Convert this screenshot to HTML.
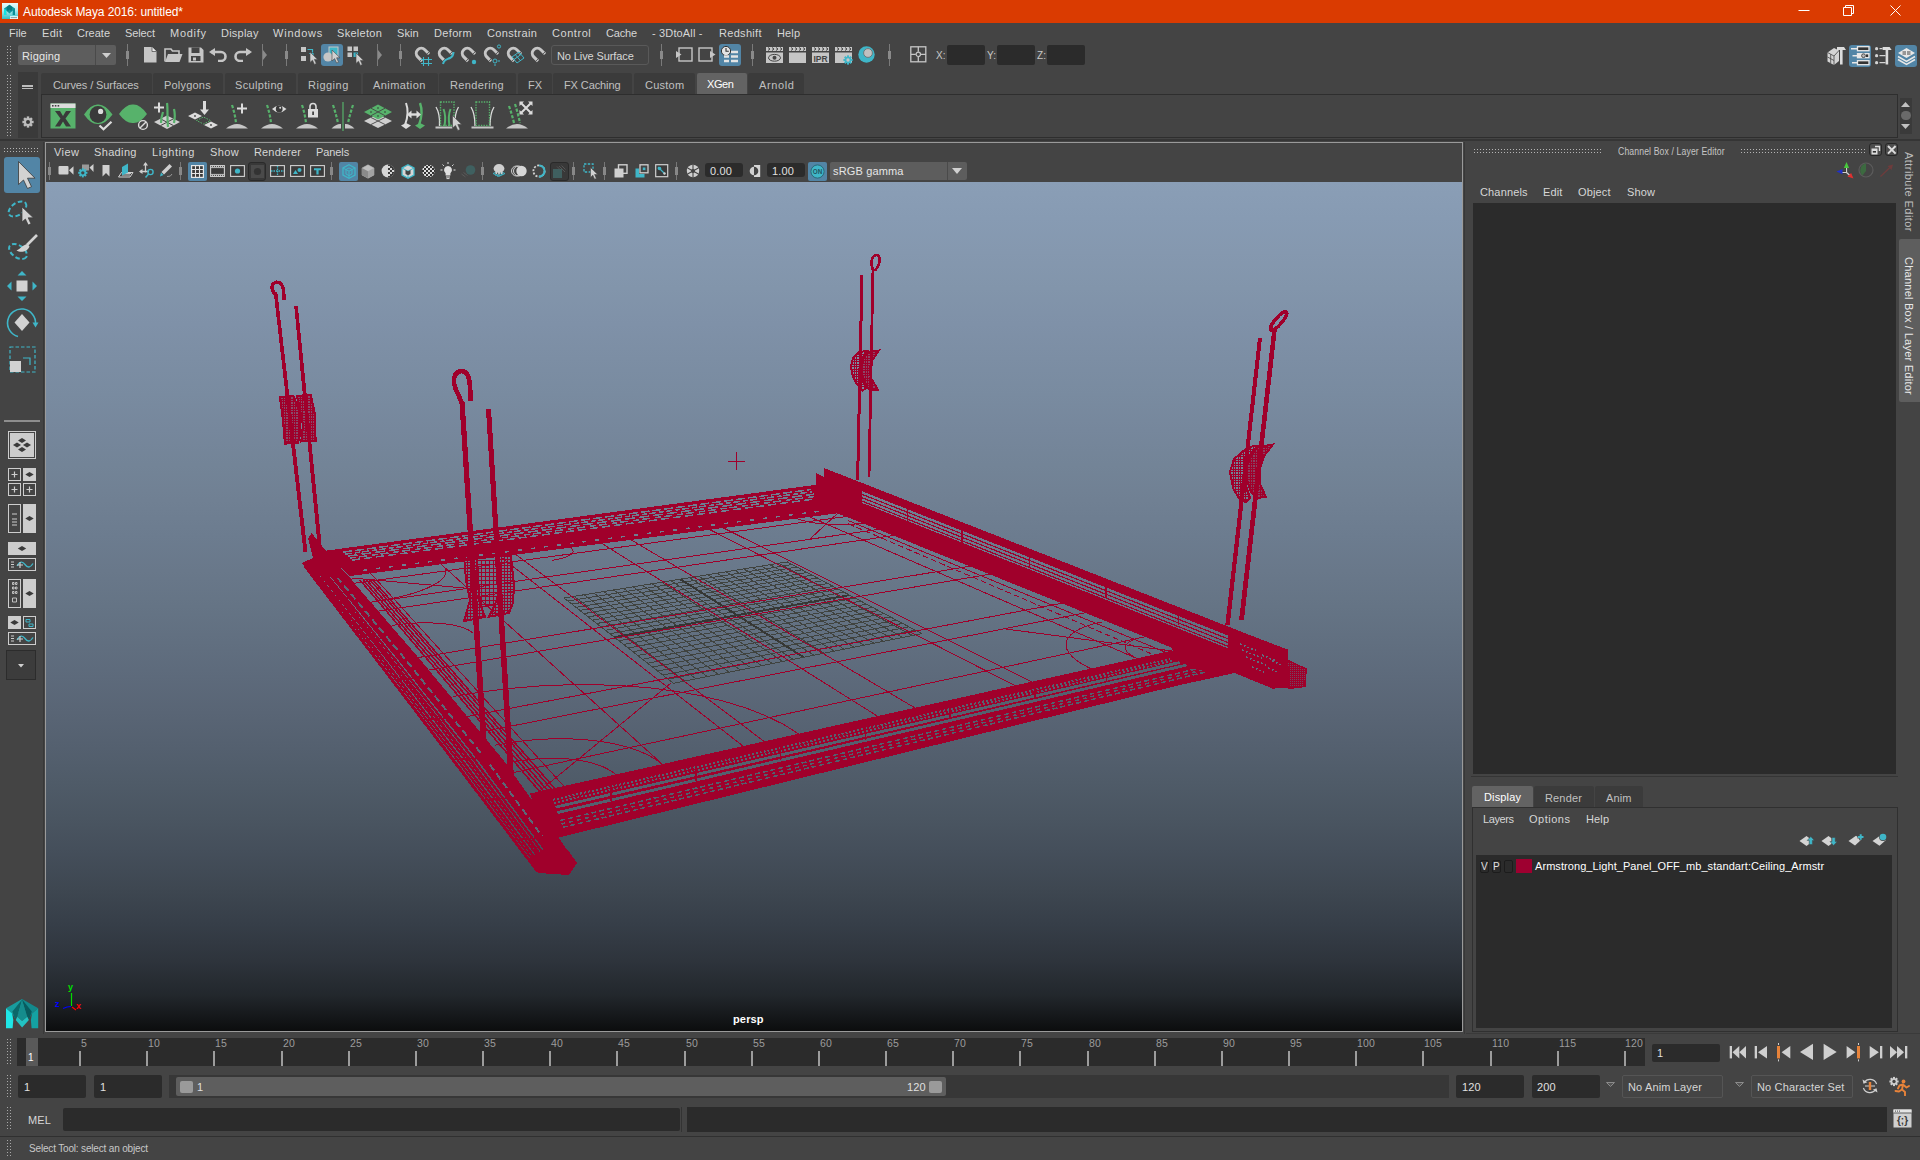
<!DOCTYPE html>
<html><head><meta charset="utf-8"><title>Autodesk Maya 2016: untitled*</title>
<style>
html,body{margin:0;padding:0}
body{width:1920px;height:1160px;background:#444444;position:relative;overflow:hidden;font-family:"Liberation Sans",sans-serif;font-size:11px;color:#d8d8d8}
div,span,svg{position:absolute;box-sizing:border-box}
.t{white-space:nowrap;line-height:14px;height:14px;letter-spacing:0.15px}
</style></head>
<body>
<div style="left:0px;top:0px;width:1920px;height:23px;background:#da3b01;"></div><svg style="left:2px;top:3px" width="16" height="16" viewBox="0 0 16 16" ><defs><linearGradient id="mti" x1="0" y1="0" x2="0" y2="1"><stop offset="0" stop-color="#e6fbfb"/><stop offset="0.45" stop-color="#b4ecee"/><stop offset="1" stop-color="#2fbfc6"/></linearGradient></defs><rect width="16" height="16" fill="url(#mti)"/><path d="M2 12V5.5L7.5 1.8L13 5.5V12H10.8V7.5L7.5 10.5L4.2 7.5V12z" fill="#0f9aa0"/><path d="M2 12V5.5l2.2 1.6V12z" fill="#12e4e4"/><path d="M13 12V5.500l-2.2 1.6V12z" fill="#0b8f95"/><path d="M4.600 4.200L7.500 1.800l2.900 2.400L9.400 8.600L7.500 6.500L5.600 8.600z" fill="#097a80"/><rect x="8" y="13.200" width="8" height="2.800" fill="#f4ffff"/><rect x="8.600" y="14" width="6.500" height="1.200" fill="#8aa"/></svg><span class="t" style="left:23px;top:5px;color:#ffffff;font-size:12px;letter-spacing:-0.1px">Autodesk Maya 2016: untitled*</span><svg style="left:1790px;top:0" width="130" height="23" viewBox="1790 0 130 23"><path d="M1798.5 10.5h11M1843.5 7.5h8v8h-8zM1845.5 7.5v-2h8v8h-2M1890.5 5.5l10 10M1900.5 5.5l-10 10" stroke="#fff" stroke-width="1" fill="none"/></svg><span class="t" style="left:9px;top:26px;color:#d6d6d6;letter-spacing:0px">File</span><span class="t" style="left:42px;top:26px;color:#d6d6d6;letter-spacing:0.33px">Edit</span><span class="t" style="left:77px;top:26px;color:#d6d6d6;letter-spacing:0px">Create</span><span class="t" style="left:125px;top:26px;color:#d6d6d6;letter-spacing:-0.12px">Select</span><span class="t" style="left:170px;top:26px;color:#d6d6d6;letter-spacing:0.73px">Modify</span><span class="t" style="left:221px;top:26px;color:#d6d6d6;letter-spacing:0.22px">Display</span><span class="t" style="left:273px;top:26px;color:#d6d6d6;letter-spacing:0.78px">Windows</span><span class="t" style="left:337px;top:26px;color:#d6d6d6;letter-spacing:0.29px">Skeleton</span><span class="t" style="left:397px;top:26px;color:#d6d6d6;letter-spacing:0.1px">Skin</span><span class="t" style="left:434px;top:26px;color:#d6d6d6;letter-spacing:0.34px">Deform</span><span class="t" style="left:487px;top:26px;color:#d6d6d6;letter-spacing:0.34px">Constrain</span><span class="t" style="left:552px;top:26px;color:#d6d6d6;letter-spacing:0.55px">Control</span><span class="t" style="left:606px;top:26px;color:#d6d6d6;letter-spacing:-0.15px">Cache</span><span class="t" style="left:652px;top:26px;color:#d6d6d6;letter-spacing:0.15px">- 3DtoAll -</span><span class="t" style="left:719px;top:26px;color:#d6d6d6;letter-spacing:0.3px">Redshift</span><span class="t" style="left:777px;top:26px;color:#d6d6d6;letter-spacing:0.15px">Help</span><div style="left:7px;top:46px;width:1px;height:20px;background:repeating-linear-gradient(to bottom,#a8a8a8 0 1px,transparent 1px 3px)"></div><div style="left:10px;top:46px;width:1px;height:20px;background:repeating-linear-gradient(to bottom,#a8a8a8 0 1px,transparent 1px 3px)"></div><div style="left:18px;top:45px;width:98px;height:20px;background:#5d5d5d;border-radius:2px"></div><div style="left:95px;top:45px;width:1px;height:20px;background:#4a4a4a;"></div><svg style="left:102px;top:53px" width="9" height="5" viewBox="0 0 9 5" ><path d="M0 0h9l-4.5 5z" fill="#cfcfcf"/></svg><span class="t" style="left:22px;top:49px;color:#e6e6e6;">Rigging</span><div style="left:127px;top:44px;width:1px;height:22px;background:#7a7a7a"></div><div style="left:126px;top:51px;width:3px;height:8px;background:#8a8a8a"></div><svg style="left:144px;top:47px" width="13" height="16" viewBox="0 0 13 16" ><path d="M0 0h8l4.5 4.5V15.5H0z" fill="#c6c6c6"/><path d="M8 0v4.5h4.5" fill="#e8e8e8" stroke="#444" stroke-width="0.7"/></svg><svg style="left:164px;top:48px" width="19" height="14" viewBox="0 0 19 14" ><path d="M1 13.5V1h6l1.5 2H15v3" fill="none" stroke="#c6c6c6" stroke-width="1.6"/><path d="M4 6h14.5l-3 8H1z" fill="#c6c6c6"/></svg><svg style="left:188px;top:47px" width="16" height="16" viewBox="0 0 16 16" ><path d="M0.5 0.5h12.5l2.5 2.5v12.5h-15z" fill="#c6c6c6"/><rect x="3.5" y="0.5" width="8" height="5.5" fill="#444"/><rect x="4.5" y="1" width="4" height="4.5" fill="#c6c6c6" opacity="0.0"/><rect x="3" y="9" width="9.5" height="5" fill="#444"/><rect x="5" y="10.5" width="3" height="3" fill="#c6c6c6"/></svg><svg style="left:209px;top:48px" width="19" height="14" viewBox="0 0 19 14" ><path d="M2 4h10a4.5 4.5 0 0 1 0 9h-3" fill="none" stroke="#c6c6c6" stroke-width="2.6"/><path d="M0 4l6-4v8z" fill="#c6c6c6"/></svg><svg style="left:233px;top:48px" width="19" height="14" viewBox="0 0 19 14" ><path d="M17 4h-10a4.5 4.5 0 0 0 0 9h3" fill="none" stroke="#c6c6c6" stroke-width="2.6"/><path d="M19 4l-6-4v8z" fill="#c6c6c6"/></svg><div style="left:262px;top:44px;width:1px;height:22px;background:#7a7a7a"></div><svg style="left:263px;top:50px" width="4" height="10" viewBox="0 0 4 10" ><path d="M0 0l4 5l-4 5z" fill="#8a8a8a"/></svg><div style="left:286px;top:44px;width:1px;height:22px;background:#7a7a7a"></div><div style="left:285px;top:51px;width:3px;height:8px;background:#8a8a8a"></div><svg style="left:300px;top:46px" width="19" height="20" viewBox="0 0 19 20" ><rect x="1" y="1" width="5" height="5" fill="#c6c6c6"/><rect x="1" y="10" width="5" height="5" fill="#c6c6c6"/><path d="M7.5 3.5h5v3M9 7.5h4v4" fill="none" stroke="#3fb6c8" stroke-width="1.2"/><path d="M10.0 6.0L10.0 16.4L12.5 14.2L14.4 18.4L16.3 17.6L14.4 13.4L17.6 13.4z" fill="#d0d0d0" stroke="#444" stroke-width="0.6"/></svg><div style="left:321px;top:44px;width:22px;height:22px;background:#5285a6;border-radius:3px"></div><svg style="left:322px;top:45px" width="20" height="20" viewBox="0 0 20 20" ><rect x="7" y="2" width="9" height="9" fill="#3fb6c8" stroke="#c6c6c6" stroke-width="1"/><circle cx="6" cy="12" r="4.6" fill="#c6c6c6"/><path d="M10.0 5.0L10.0 16.0L12.6 13.6L14.6 18.0L16.6 17.2L14.6 12.8L18.0 12.8z" fill="#d0d0d0" stroke="#444" stroke-width="0.6"/></svg><svg style="left:347px;top:46px" width="19" height="20" viewBox="0 0 19 20" ><rect x="0.5" y="0.5" width="4.5" height="4.5" fill="#c6c6c6"/><rect x="6.5" y="0.5" width="4.5" height="4.5" fill="#c6c6c6"/><rect x="0.5" y="6.5" width="4.5" height="4.5" fill="#c6c6c6"/><rect x="6.5" y="6.5" width="4.5" height="4.5" fill="#3fb6c8"/><path d="M9.0 7.0L9.0 17.4L11.5 15.2L13.4 19.4L15.3 18.6L13.4 14.4L16.6 14.4z" fill="#d0d0d0" stroke="#444" stroke-width="0.6"/></svg><div style="left:377px;top:44px;width:1px;height:22px;background:#7a7a7a"></div><svg style="left:378px;top:50px" width="4" height="10" viewBox="0 0 4 10" ><path d="M0 0l4 5l-4 5z" fill="#8a8a8a"/></svg><div style="left:400px;top:44px;width:1px;height:22px;background:#7a7a7a"></div><div style="left:399px;top:51px;width:3px;height:8px;background:#8a8a8a"></div><svg style="left:414px;top:45px" width="20" height="21" viewBox="0 0 20 21" ><g transform="rotate(-45 8 9)"><path d="M3 14V8a5 5 0 0 1 10 0v6" fill="none" stroke="#c6c6c6" stroke-width="3"/><path d="M1.5 12.5h3M11.5 12.5h3" stroke="#444" stroke-width="0.8"/></g><path d="M9.5 12v9M14.5 12v9M7 14.5h11M7 18.5h11" stroke="#3fb6c8" stroke-width="1.1" fill="none"/></svg><svg style="left:437px;top:45px" width="20" height="21" viewBox="0 0 20 21" ><g transform="rotate(-45 8 9)"><path d="M3 14V8a5 5 0 0 1 10 0v6" fill="none" stroke="#c6c6c6" stroke-width="3"/><path d="M1.5 12.5h3M11.5 12.5h3" stroke="#444" stroke-width="0.8"/></g><path d="M6 19c1-5 4-4.5 7-6c3-1.5 3.5-4 3.5-6" stroke="#3fb6c8" stroke-width="2" fill="none"/></svg><svg style="left:460px;top:45px" width="20" height="21" viewBox="0 0 20 21" ><g transform="rotate(-45 8 9)"><path d="M3 14V8a5 5 0 0 1 10 0v6" fill="none" stroke="#c6c6c6" stroke-width="3"/><path d="M1.5 12.5h3M11.5 12.5h3" stroke="#444" stroke-width="0.8"/></g><circle cx="14" cy="17" r="2.2" fill="#3fb6c8"/></svg><svg style="left:483px;top:43px" width="20" height="23" viewBox="0 0 20 23" ><g transform="translate(0 2) rotate(-45 8 9)"><path d="M3 14V8a5 5 0 0 1 10 0v6" fill="none" stroke="#c6c6c6" stroke-width="3"/><path d="M1.5 12.5h3M11.5 12.5h3" stroke="#444" stroke-width="0.8"/></g><circle cx="16" cy="3.5" r="1.6" fill="none" stroke="#3fb6c8" stroke-width="1"/><circle cx="12" cy="18" r="2" fill="none" stroke="#3fb6c8" stroke-width="1"/><path d="M12 21v2M15 18h2" stroke="#3fb6c8" stroke-width="1"/></svg><svg style="left:506px;top:45px" width="20" height="21" viewBox="0 0 20 21" ><g transform="rotate(-45 8 9)"><path d="M3 14V8a5 5 0 0 1 10 0v6" fill="none" stroke="#c6c6c6" stroke-width="3"/><path d="M1.5 12.5h3M11.5 12.5h3" stroke="#444" stroke-width="0.8"/></g><path d="M6 12l7-5l5 6l-7 5zM9.5 9.8l5 6M8 14.5l7-5" stroke="#3fb6c8" stroke-width="1" fill="none"/></svg><svg style="left:530px;top:45px" width="20" height="21" viewBox="0 0 20 21" ><g transform="rotate(-45 8 9)"><path d="M3 14V8a5 5 0 0 1 10 0v6" fill="none" stroke="#c6c6c6" stroke-width="3"/><path d="M1.5 12.5h3M11.5 12.5h3" stroke="#444" stroke-width="0.8"/></g></svg><div style="left:661px;top:44px;width:1px;height:22px;background:#7a7a7a"></div><div style="left:660px;top:51px;width:3px;height:8px;background:#8a8a8a"></div><svg style="left:676px;top:47px" width="18" height="16" viewBox="0 0 18 16" ><rect x="3" y="1" width="13" height="13" fill="none" stroke="#c6c6c6" stroke-width="1.4"/><path d="M0 4l5.5 3.5L0 11z" fill="#c6c6c6"/></svg><svg style="left:698px;top:47px" width="19" height="16" viewBox="0 0 19 16" ><rect x="1" y="1" width="13" height="13" fill="none" stroke="#c6c6c6" stroke-width="1.4"/><path d="M12 4l5.5 3.5L12 11z" fill="#c6c6c6"/></svg><div style="left:719px;top:44px;width:22px;height:22px;background:#5285a6;border-radius:3px"></div><svg style="left:720px;top:45px" width="20" height="20" viewBox="0 0 20 20" ><circle cx="6" cy="6" r="4.6" fill="#e4e4e4" stroke="#333" stroke-width="1"/><path d="M6 3v3.3h2.8" stroke="#333" stroke-width="1.1" fill="none"/><path d="M11 7h7M11 11.5h7M11 16h7" stroke="#e4e4e4" stroke-width="2.4"/><path d="M4 11.5h5M4 16h5" stroke="#e4e4e4" stroke-width="2.4"/></svg><div style="left:752px;top:44px;width:1px;height:22px;background:#7a7a7a"></div><div style="left:751px;top:51px;width:3px;height:8px;background:#8a8a8a"></div><svg style="left:766px;top:47px" width="17" height="16" viewBox="0 0 17 16" ><path d="M0 0h17v4h-17z" fill="#c6c6c6"/><path d="M2 0.5l2 1.5l-2 1.5M6 0.5l2 1.5l-2 1.5M10 0.5l2 1.5l-2 1.5M14 0.5l2 1.5l-2 1.5" stroke="#444" stroke-width="1" fill="none"/><path d="M0 5.5h17v10.5h-17z" fill="#c6c6c6"/><ellipse cx="8.5" cy="10.8" rx="6" ry="3.4" fill="none" stroke="#444" stroke-width="1"/><circle cx="8.5" cy="10.8" r="2" fill="#444"/></svg><svg style="left:789px;top:47px" width="17" height="16" viewBox="0 0 17 16" ><path d="M0 0h17v4h-17z" fill="#c6c6c6"/><path d="M2 0.5l2 1.5l-2 1.5M6 0.5l2 1.5l-2 1.5M10 0.5l2 1.5l-2 1.5M14 0.5l2 1.5l-2 1.5" stroke="#444" stroke-width="1" fill="none"/><path d="M0 5.5h17v10.5h-17z" fill="#c6c6c6"/></svg><svg style="left:812px;top:47px" width="17" height="16" viewBox="0 0 17 16" ><path d="M0 0h17v4h-17z" fill="#c6c6c6"/><path d="M2 0.5l2 1.5l-2 1.5M6 0.5l2 1.5l-2 1.5M10 0.5l2 1.5l-2 1.5M14 0.5l2 1.5l-2 1.5" stroke="#444" stroke-width="1" fill="none"/><path d="M0 5.5h17v10.5h-17z" fill="#c6c6c6"/><text x="8.5" y="14.5" font-size="8.5" font-weight="bold" text-anchor="middle" fill="#444" font-family="Liberation Sans,sans-serif">IPR</text></svg><svg style="left:835px;top:47px" width="19" height="18" viewBox="0 0 19 18" ><path d="M0 0h17v4h-17z" fill="#c6c6c6"/><path d="M2 0.5l2 1.5l-2 1.5M6 0.5l2 1.5l-2 1.5M10 0.5l2 1.5l-2 1.5M14 0.5l2 1.5l-2 1.5" stroke="#444" stroke-width="1" fill="none"/><path d="M0 5.5h17v10.5h-17z" fill="#c6c6c6"/><circle cx="13" cy="13" r="3.31" fill="#3fb6c8"/><rect x="11.99" y="8.40" width="2.02" height="9.20" fill="#3fb6c8" transform="rotate(0 13 13)"/><rect x="11.99" y="8.40" width="2.02" height="9.20" fill="#3fb6c8" transform="rotate(45 13 13)"/><rect x="11.99" y="8.40" width="2.02" height="9.20" fill="#3fb6c8" transform="rotate(90 13 13)"/><rect x="11.99" y="8.40" width="2.02" height="9.20" fill="#3fb6c8" transform="rotate(135 13 13)"/><circle cx="13" cy="13" r="1.66" fill="#c6c6c6"/></svg><svg style="left:858px;top:46px" width="18" height="18" viewBox="0 0 18 18" ><circle cx="8.5" cy="8.5" r="8.2" fill="#3fb6c8"/><circle cx="10" cy="7" r="4.4" fill="#c0c0c0" stroke="#6a6a6a" stroke-width="0.8"/></svg><div style="left:889px;top:44px;width:1px;height:22px;background:#7a7a7a"></div><div style="left:888px;top:51px;width:3px;height:8px;background:#8a8a8a"></div><svg style="left:910px;top:46px" width="17" height="17" viewBox="0 0 17 17" ><rect x="0.8" y="0.8" width="15" height="15" fill="none" stroke="#c6c6c6" stroke-width="1.3"/><path d="M8.3 0.8v5M8.3 11v5M0.8 8.3h5M11 8.3h5" stroke="#c6c6c6" stroke-width="1.3"/><circle cx="8.3" cy="8.3" r="2.2" fill="none" stroke="#c6c6c6" stroke-width="1.2"/></svg><svg style="left:1827px;top:46px" width="20" height="20" viewBox="0 0 20 20" ><path d="M0.5 6.5l6.5-4.5l5 2.500v10.500l-5 4l-6.500-3.500z" fill="#d4d4d4"/><path d="M0.5 6.500l6.500 3.500l5-5.500M7 10v9M0.5 11l6.500 3.500M3.700 8.200v9" stroke="#444" stroke-width="0.8" fill="none"/><path d="M10 1h7l2 3h-9z" fill="#dcdcdc"/><rect x="13" y="4" width="2.6" height="14.5" fill="#dcdcdc"/></svg><div style="left:1849px;top:45px;width:22px;height:22px;background:#5285a6;border-radius:3px"></div><svg style="left:1850px;top:46px" width="20" height="20" viewBox="0 0 20 20" ><path d="M1 2.700h6M2.500 9.700h4.500M2 16.700h5" stroke="#e8e8e8" stroke-width="1.400"/><rect x="7.500" y="0.700" width="11.500" height="4" fill="#333" stroke="#e8e8e8" stroke-width="1.300"/><rect x="7.500" y="14.700" width="11.500" height="4" fill="#333" stroke="#e8e8e8" stroke-width="1.300"/><rect x="7.500" y="7.700" width="11.500" height="4" fill="#e8e8e8" stroke="#e8e8e8" stroke-width="1.300"/><circle cx="13.500" cy="9.700" r="1.900" fill="#bbb" stroke="#333" stroke-width="0.800"/><rect x="16" y="8.400" width="2.200" height="2.600" fill="#333"/></svg><svg style="left:1874px;top:46px" width="20" height="20" viewBox="0 0 20 20" ><circle cx="2.600" cy="2.700" r="1.600" fill="#d4d4d4"/><circle cx="2.600" cy="9.700" r="1.600" fill="#d4d4d4"/><circle cx="2.600" cy="16.700" r="1.600" fill="#d4d4d4"/><path d="M5.500 2.700h3M5.500 9.700h6M5.500 16.700h6" stroke="#d4d4d4" stroke-width="1.300"/><path d="M8.6 1h7l2 3h-9z" fill="#dcdcdc"/><rect x="11.6" y="4" width="2.6" height="14.5" fill="#dcdcdc"/></svg><div style="left:1895px;top:45px;width:22px;height:22px;background:#5285a6;border-radius:3px"></div><svg style="left:1897px;top:46px" width="19" height="21" viewBox="0 0 19 21" ><path d="M1 13.500l8.500 5l8.500-5M1 10.500l8.500 5l8.500-5" stroke="#e8e8e8" stroke-width="1.500" fill="none"/><path d="M1 7l8.500-5l8.500 5l-8.500 5z" fill="#e8e8e8"/><path d="M5.500 6h3.500M10 6h3.500M5.500 8h3.500M10 8h3.500" stroke="#333" stroke-width="0.900" fill="none"/></svg><div style="left:551px;top:45px;width:98px;height:20px;background:#444;border:1px solid #595959;border-radius:3px"></div><span class="t" style="left:557px;top:49px;color:#d6d6d6;letter-spacing:-0.1px">No Live Surface</span><span class="t" style="left:936px;top:49px;color:#c8c8c8;font-size:10px;">X:</span><div style="left:947px;top:45px;width:38px;height:20px;background:#2b2b2b;border-radius:2px"></div><span class="t" style="left:987px;top:49px;color:#c8c8c8;font-size:10px;">Y:</span><div style="left:997px;top:45px;width:38px;height:20px;background:#2b2b2b;border-radius:2px"></div><span class="t" style="left:1037px;top:49px;color:#c8c8c8;font-size:10px;">Z:</span><div style="left:1047px;top:45px;width:38px;height:20px;background:#2b2b2b;border-radius:2px"></div><div style="left:7px;top:75px;width:1px;height:62px;background:repeating-linear-gradient(to bottom,#a8a8a8 0 1px,transparent 1px 3px)"></div><div style="left:10px;top:75px;width:1px;height:62px;background:repeating-linear-gradient(to bottom,#a8a8a8 0 1px,transparent 1px 3px)"></div><div style="left:18px;top:72px;width:20px;height:66px;background:#3a3a3a;"></div><div style="left:22px;top:85px;width:11px;height:2px;background:#bdbdbd;"></div><div style="left:22px;top:88px;width:11px;height:1px;background:#bdbdbd;"></div><svg style="left:22px;top:116px" width="12" height="12" viewBox="0 0 12 12" ><circle cx="6" cy="6" r="4.03" fill="#bdbdbd"/><rect x="4.77" y="0.40" width="2.46" height="11.20" fill="#bdbdbd" transform="rotate(0 6 6)"/><rect x="4.77" y="0.40" width="2.46" height="11.20" fill="#bdbdbd" transform="rotate(45 6 6)"/><rect x="4.77" y="0.40" width="2.46" height="11.20" fill="#bdbdbd" transform="rotate(90 6 6)"/><rect x="4.77" y="0.40" width="2.46" height="11.20" fill="#bdbdbd" transform="rotate(135 6 6)"/><circle cx="6" cy="6" r="2.02" fill="#3a3a3a"/></svg><div style="left:41px;top:73px;width:111px;height:21px;background:#3b3b3b;border-radius:2px 2px 0 0"></div><span class="t" style="left:53px;top:78px;color:#c0c0c0;letter-spacing:-0.1px">Curves / Surfaces</span><div style="left:153px;top:73px;width:70px;height:21px;background:#3b3b3b;border-radius:2px 2px 0 0"></div><span class="t" style="left:164px;top:78px;color:#c0c0c0;letter-spacing:0.2px">Polygons</span><div style="left:225px;top:73px;width:71px;height:21px;background:#3b3b3b;border-radius:2px 2px 0 0"></div><span class="t" style="left:235px;top:78px;color:#c0c0c0;letter-spacing:0.34px">Sculpting</span><div style="left:298px;top:73px;width:63px;height:21px;background:#3b3b3b;border-radius:2px 2px 0 0"></div><span class="t" style="left:308px;top:78px;color:#c0c0c0;letter-spacing:0.5px">Rigging</span><div style="left:363px;top:73px;width:75px;height:21px;background:#3b3b3b;border-radius:2px 2px 0 0"></div><span class="t" style="left:373px;top:78px;color:#c0c0c0;letter-spacing:0.43px">Animation</span><div style="left:439px;top:73px;width:77px;height:21px;background:#3b3b3b;border-radius:2px 2px 0 0"></div><span class="t" style="left:450px;top:78px;color:#c0c0c0;letter-spacing:0.37px">Rendering</span><div style="left:518px;top:73px;width:34px;height:21px;background:#3b3b3b;border-radius:2px 2px 0 0"></div><span class="t" style="left:528px;top:78px;color:#c0c0c0;letter-spacing:0px">FX</span><div style="left:553px;top:73px;width:79px;height:21px;background:#3b3b3b;border-radius:2px 2px 0 0"></div><span class="t" style="left:564px;top:78px;color:#c0c0c0;letter-spacing:-0.1px">FX Caching</span><div style="left:634px;top:73px;width:61px;height:21px;background:#3b3b3b;border-radius:2px 2px 0 0"></div><span class="t" style="left:645px;top:78px;color:#c0c0c0;letter-spacing:0.25px">Custom</span><div style="left:697px;top:73px;width:50px;height:21px;background:#636363;border-radius:2px 2px 0 0"></div><span class="t" style="left:707px;top:77px;color:#ffffff;letter-spacing:-0.4px">XGen</span><div style="left:748px;top:73px;width:56px;height:21px;background:#3b3b3b;border-radius:2px 2px 0 0"></div><span class="t" style="left:759px;top:78px;color:#c0c0c0;letter-spacing:0.6px">Arnold</span><div style="left:41px;top:94px;width:1857px;height:44px;background:#444444;border:1px solid #2e2e2e"></div><svg style="left:50px;top:101px" width="26" height="30" viewBox="0 0 26 30" ><rect x="0.5" y="2.5" width="25" height="25" fill="#57b26b"/><rect x="0.5" y="2.5" width="25" height="4.5" fill="#dcdcdc"/><rect x="2" y="4" width="1.6" height="1.6" fill="#444"/><rect x="4.8" y="4" width="1.6" height="1.6" fill="#444"/><rect x="7.6" y="4" width="1.6" height="1.6" fill="#444"/><path d="M5 10h5l3 5l3-5h5l-5.5 7.5l5.5 8h-5l-3-5l-3 5h-5l5.5-8z" fill="#3a3a3a"/></svg><svg style="left:84px;top:101px" width="30" height="30" viewBox="0 0 30 30" ><path d="M0 13.5Q7 3 14 3.5Q21 3 28.5 13.5Q21 23.5 14 23Q7 23.5 0 13.5z" fill="#57b26b"/><circle cx="14" cy="13.5" r="8.4" fill="#3a3a3a"/><circle cx="16.6" cy="10.4" r="2.6" fill="#dcdcdc"/><path d="M15.5 24.5l4 3.8l8-7.5" fill="none" stroke="#dcdcdc" stroke-width="2.2"/></svg><svg style="left:119px;top:101px" width="30" height="30" viewBox="0 0 30 30" ><path d="M0 13Q7 3 14 3.5Q21 3 28 13Q21 22.5 14 22Q7 22.5 0 13z" fill="#57b26b"/><circle cx="24" cy="24" r="4.4" fill="#444" stroke="#dcdcdc" stroke-width="1.4"/><path d="M21 27l6-6" stroke="#dcdcdc" stroke-width="1.4"/></svg><svg style="left:153px;top:101px" width="29" height="30" viewBox="0 0 29 30" ><path d="M1 21l13-6.5l13 6.5l-13 7z" fill="#cfcfcf"/><path d="M7.5 17.8l13 6.8M20.5 17.8l-13 6.8" stroke="#444" stroke-width="1"/><path d="M1 6.5h10M6 1.5v10" stroke="#dcdcdc" stroke-width="2"/><path d="M8 22c0-5 1-8 2-11M15 26c-1-8 0-18-1-24M21 22c1-5 1-10 0-14" fill="none" stroke="#57b26b" stroke-width="2.2"/></svg><svg style="left:188px;top:101px" width="30" height="30" viewBox="0 0 30 30" ><path d="M16.5 0v10" stroke="#dcdcdc" stroke-width="3"/><path d="M12 8.5h9l-4.5 5.5z" fill="#dcdcdc"/><path d="M0 15l7-3.5l7 3.5l-7 3.5zM16 24l7-3.5l7 3.5l-7 3.5z" fill="#dcdcdc"/><circle cx="7" cy="15" r="0.9" fill="#444"/><circle cx="23" cy="24" r="0.9" fill="#444"/><path d="M8.5 19.5l7-3.5l7 3.5l-7 3.5z" fill="none" stroke="#57b26b" stroke-width="1" stroke-dasharray="1.6 1.2"/></svg><svg style="left:226px;top:101px" width="24" height="30" viewBox="0 0 24 30" ><path d="M0.0 27.5q11.0 -9 22 0z" fill="#c6c6c6"/><path d="M6 4Q9 13.0 10 22" fill="none" stroke="#57b26b" stroke-width="2.2" stroke-dasharray="3.2 1.6"/><path d="M11 7.5h10M16 2.5v10" stroke="#dcdcdc" stroke-width="2"/></svg><svg style="left:261px;top:101px" width="27" height="30" viewBox="0 0 27 30" ><path d="M0.0 27.5q11.0 -9 22 0z" fill="#c6c6c6"/><path d="M6 4Q9 13.0 10 22" fill="none" stroke="#57b26b" stroke-width="2.2" stroke-dasharray="3.2 1.6"/><path d="M11 8Q18 1 25.5 8Q18 15 11 8z" fill="#dcdcdc"/><circle cx="18.2" cy="8" r="3.4" fill="#3a3a3a"/><circle cx="19.2" cy="6.8" r="1" fill="#dcdcdc"/></svg><svg style="left:296px;top:101px" width="24" height="30" viewBox="0 0 24 30" ><path d="M0.0 27.5q11.0 -9 22 0z" fill="#c6c6c6"/><path d="M6 4Q9 13.0 10 22" fill="none" stroke="#57b26b" stroke-width="2.2" stroke-dasharray="3.2 1.6"/><rect x="12" y="8" width="10" height="8.5" fill="#dcdcdc"/><path d="M14 8V5.5a3 3 0 0 1 6 0V8" fill="none" stroke="#dcdcdc" stroke-width="1.6"/><rect x="16.2" y="10.5" width="1.8" height="3.5" fill="#444"/></svg><svg style="left:331px;top:101px" width="24" height="30" viewBox="0 0 24 30" ><path d="M0.5 27.5q5 -5 9.5 -4.5v4.5zM23.5 27.5q-5 -5 -9.5 -4.5v4.5z" fill="#c6c6c6"/><path d="M12 1v29" stroke="#57b26b" stroke-width="1.2"/><path d="M2 4Q5 13.0 7 22" fill="none" stroke="#57b26b" stroke-width="2.2" stroke-dasharray="3.2 1.6"/><path d="M22 4Q19 13.0 17 22" fill="none" stroke="#57b26b" stroke-width="2.2" stroke-dasharray="3.2 1.6"/></svg><svg style="left:364px;top:101px" width="28" height="30" viewBox="0 0 28 30" ><path d="M0 20l14-7l14 7l-14 7z" fill="#cfcfcf"/><path d="M7 16.5l14 7M21 16.5l-14 7" stroke="#444" stroke-width="0.9"/><path d="M0 11l14-7.5l14 7.5l-14 7.5z" fill="#57b26b"/><path d="M7 7.2l14 7.5M21 7.2l-14 7.5" stroke="#444" stroke-width="0.9"/><circle cx="14" cy="7" r="0.8" fill="#333"/><circle cx="7" cy="11" r="0.8" fill="#333"/><circle cx="21" cy="11" r="0.8" fill="#333"/><circle cx="14" cy="15" r="0.8" fill="#333"/></svg><svg style="left:400px;top:101px" width="26" height="30" viewBox="0 0 26 30" ><path d="M6 2c3 8 2 14-1 22" fill="none" stroke="#dcdcdc" stroke-width="2"/><path d="M20 2c3 8 2 14-1 22" fill="none" stroke="#57b26b" stroke-width="2.4"/><path d="M1 24.5l5-2.5l5 2.5l-5 3.5z" fill="#dcdcdc"/><path d="M15 24.5l5-2.5l5 2.5l-5 3.5z" fill="#57b26b"/><path d="M10 13.5h8" stroke="#dcdcdc" stroke-width="2.4"/><path d="M7 13.5l4.5-4v8zM21 13.5l-4.5-4v8z" fill="#dcdcdc"/></svg><svg style="left:435px;top:101px" width="29" height="32" viewBox="0 0 29 32" ><path d="M0.5 26.5h17" stroke="#c6c6c6" stroke-width="2"/><path d="M1 6c3 5 4 10 3.5 19M23.5 6c-3 5 -4 10 -3.5 19" fill="none" stroke="#dcdcdc" stroke-width="1.3"/><path d="M8.5 8c2 5 2 11 1 17M15.5 8c-2 5 -2 11 -1 17" fill="none" stroke="#57b26b" stroke-width="2"/><rect x="5.5" y="1" width="13.5" height="23.5" fill="none" stroke="#57b26b" stroke-width="1.4" stroke-dasharray="1.4 1.2"/><path d="M17.5 14.5L17.5 27.1L20.5 24.4L22.8 29.4L25.1 28.5L22.8 23.5L26.7 23.5z" fill="#d0d0d0" stroke="#444" stroke-width="0.6"/></svg><svg style="left:470px;top:101px" width="26" height="30" viewBox="0 0 26 30" ><path d="M1.5 26.5h22" stroke="#c6c6c6" stroke-width="2"/><path d="M1 6c3 5 4 10 4 19M24 6c-3 5 -4 10 -4 19" fill="none" stroke="#dcdcdc" stroke-width="1.3"/><rect x="6" y="1" width="13.5" height="23.5" fill="none" stroke="#57b26b" stroke-width="1.4" stroke-dasharray="1.4 1.2"/></svg><svg style="left:506px;top:101px" width="28" height="30" viewBox="0 0 28 30" ><path d="M0.0 27.5q11.0 -9 22 0z" fill="#c6c6c6"/><path d="M3 5Q6 13.5 8 22" fill="none" stroke="#57b26b" stroke-width="2.2" stroke-dasharray="3.2 1.6"/><path d="M9 3Q12 12.5 14 22" fill="none" stroke="#57b26b" stroke-width="2.2" stroke-dasharray="3.2 1.6"/><path d="M14.5 1.5l11 11M25.5 1.5l-11 11" stroke="#dcdcdc" stroke-width="2"/><path d="M13.5 0.5h4.5l-4.5 4.5zM26.5 0.5h-4.5l4.5 4.5zM13.5 13.5h4.5l-4.5-4.5zM26.5 13.5h-4.5l4.5-4.5z" fill="#dcdcdc"/></svg><div style="left:1900px;top:98px;width:12px;height:36px;background:#3a3a3a;"></div><svg style="left:1901px;top:102px" width="9" height="5" viewBox="0 0 9 5" ><path d="M0 5h9l-4.5 -5z" fill="#c0c0c0"/></svg><svg style="left:1901px;top:124px" width="9" height="5" viewBox="0 0 9 5" ><path d="M0 0h9l-4.5 5z" fill="#c0c0c0"/></svg><div style="left:1901px;top:111px;width:10px;height:9px;background:#6a6a6a;border-radius:5px"></div><div style="left:0px;top:139px;width:1920px;height:2px;background:#353535;"></div><div style="left:4px;top:148px;width:34px;height:1px;background:repeating-linear-gradient(to right,#b4b4b4 0 1px,transparent 1px 3px)"></div><div style="left:4px;top:151px;width:34px;height:1px;background:repeating-linear-gradient(to right,#b4b4b4 0 1px,transparent 1px 3px)"></div><div style="left:4px;top:157px;width:36px;height:36px;background:#5285a6;border-radius:3px"></div><svg style="left:4px;top:157px" width="36" height="36" viewBox="0 0 36 36" ><path d="M14.5 4.5v23l5-4.5l4 8.5l4-1.8l-4-8.5h7.5z" fill="#d2d2d2" stroke="#3a3a3a" stroke-width="0.8"/></svg><svg style="left:6px;top:197px" width="32" height="30" viewBox="0 0 32 30" ><ellipse cx="11.5" cy="12" rx="10" ry="6" transform="rotate(-35 11.5 12)" fill="none" stroke="#3fb6c8" stroke-width="2" stroke-dasharray="4.5 2.5"/><path d="M16 10v15l3.4-3l2.8 6l2.8-1.2l-2.8-6h5.2z" fill="#d2d2d2" stroke="#3a3a3a" stroke-width="0.7"/></svg><svg style="left:6px;top:233px" width="32" height="32" viewBox="0 0 32 32" ><ellipse cx="12" cy="18.5" rx="10" ry="6" transform="rotate(35 12 18.5)" fill="none" stroke="#3fb6c8" stroke-width="2" stroke-dasharray="4.5 2.5"/><path d="M31 2l-10 10" stroke="#d2d2d2" stroke-width="2.6"/><path d="M21.5 11c-5 1-7 5-11 6.5c4 2.5 11 1.5 13-4z" fill="#d2d2d2"/></svg><svg style="left:6px;top:270px" width="32" height="32" viewBox="0 0 32 32" ><rect x="10.5" y="10.5" width="11" height="11" fill="#d2d2d2"/><path d="M16 1l4.5 4.5h-9zM16 31l4.5-4.5h-9zM1 16l4.5-4.5v9zM31 16l-4.5-4.5v9z" fill="#3fb6c8"/></svg><svg style="left:5px;top:307px" width="34" height="32" viewBox="0 0 34 32" ><path d="M17 7l7.5 8.5l-7.5 8.5l-7.5-8.5z" fill="#d2d2d2"/><path d="M13 29.5A14 14 0 1 1 30.5 17" fill="none" stroke="#3fb6c8" stroke-width="1.6"/><path d="M27.5 15.5h6l-3 5z" fill="#3fb6c8"/></svg><svg style="left:8px;top:345px" width="30" height="30" viewBox="0 0 30 30" ><rect x="2" y="2" width="25" height="25" fill="none" stroke="#3fb6c8" stroke-width="1.2" stroke-dasharray="3.5 2"/><rect x="2" y="16" width="11" height="11" fill="#d2d2d2"/><path d="M15 13h7v7" fill="none" stroke="#3fb6c8" stroke-width="1.2"/></svg><div style="left:4px;top:420px;width:36px;height:2px;background:#8e8e8e"></div><svg style="left:8px;top:431px" width="28" height="28" viewBox="0 0 28 28" ><rect x="0" y="0" width="28" height="28" fill="#cdcdcd"/><rect x="1.5" y="1.5" width="25" height="25" fill="none" stroke="#444" stroke-width="1"/><path d="M10 9.5l4 -2.6l4 2.6l-4 2.6z" fill="#3a3a3a"/><path d="M5 14l4 -2.6l4 2.6l-4 2.6z" fill="#3a3a3a"/><path d="M15 14l4 -2.6l4 2.6l-4 2.6z" fill="#3a3a3a"/><path d="M10 18.5l4 -2.6l4 2.6l-4 2.6z" fill="#3a3a3a"/></svg><svg style="left:8px;top:468px" width="28" height="28" viewBox="0 0 28 28" ><rect x="0.5" y="0.5" width="12" height="12" fill="none" stroke="#cdcdcd" stroke-width="1"/><path d="M3.5 6.5h6M6.5 3.5v6" stroke="#cdcdcd" stroke-width="1.2"/><rect x="15" y="0" width="13" height="13" fill="#cdcdcd"/><path d="M17.3 6.5l4.2 -2.5l4.2 2.5l-4.2 2.5z" fill="#3a3a3a"/><rect x="0.5" y="15.5" width="12" height="12" fill="none" stroke="#cdcdcd" stroke-width="1"/><path d="M3.5 21.5h6M6.5 18.5v6" stroke="#cdcdcd" stroke-width="1.2"/><rect x="15.5" y="15.5" width="12" height="12" fill="none" stroke="#cdcdcd" stroke-width="1"/><path d="M18.5 21.5h6M21.5 18.5v6" stroke="#cdcdcd" stroke-width="1.2"/></svg><svg style="left:8px;top:504px" width="28" height="29" viewBox="0 0 28 29" ><rect x="0.5" y="0.5" width="12" height="28" fill="none" stroke="#cdcdcd" stroke-width="1"/><path d="M4 10h5M4 15h5M4 18h5M4 21h5" stroke="#cdcdcd" stroke-width="1"/><rect x="15" y="0" width="13" height="29" fill="#cdcdcd"/><path d="M17.3 14.5l4.2 -2.5l4.2 2.5l-4.2 2.5z" fill="#3a3a3a"/></svg><svg style="left:8px;top:542px" width="28" height="29" viewBox="0 0 28 29" ><rect x="0" y="0" width="28" height="13" fill="#cdcdcd"/><path d="M9.8 6.5l4.2 -2.5l4.2 2.5l-4.2 2.5z" fill="#3a3a3a"/><rect x="0.5" y="16.5" width="27" height="12" fill="none" stroke="#cdcdcd" stroke-width="1"/><path d="M3 20h3M3 22.5h3M3 25h3" stroke="#cdcdcd" stroke-width="1"/><path d="M9 24q4 -7 8 -1.5t8 -1" fill="none" stroke="#3fb6c8" stroke-width="1.3"/><path d="M9 23h6M12 20v6" stroke="#cdcdcd" stroke-width="1.2"/></svg><svg style="left:8px;top:579px" width="28" height="29" viewBox="0 0 28 29" ><rect x="0.5" y="0.5" width="12" height="28" fill="none" stroke="#cdcdcd" stroke-width="1"/><path d="M4.5 3.5h1.5v2h-1.5zM7.5 3.5h1.5v2h-1.5zM4.5 8h1.5v2h-1.5zM7.5 8h1.5v2h-1.5zM4.5 12.5h1.5v2h-1.5zM7.5 12.5h1.5v2h-1.5zM4.5 19h4v4h-4z" fill="none" stroke="#cdcdcd" stroke-width="0.9"/><rect x="15" y="0" width="13" height="29" fill="#cdcdcd"/><path d="M17.3 14.5l4.2 -2.5l4.2 2.5l-4.2 2.5z" fill="#3a3a3a"/></svg><svg style="left:8px;top:616px" width="28" height="29" viewBox="0 0 28 29" ><rect x="0" y="0" width="13" height="13" fill="#cdcdcd"/><path d="M2.3 6.5l4.2 -2.5l4.2 2.5l-4.2 2.5z" fill="#3a3a3a"/><rect x="15.5" y="0.5" width="12" height="12" fill="none" stroke="#cdcdcd" stroke-width="1"/><path d="M18 3.5h4v2.5h-4zM21 8h4v2.5h-4z" fill="none" stroke="#3fb6c8" stroke-width="1"/><rect x="0.5" y="16.5" width="27" height="12" fill="none" stroke="#cdcdcd" stroke-width="1"/><path d="M3 20h3M3 22.5h3M3 25h3" stroke="#cdcdcd" stroke-width="1"/><path d="M9 24q4 -7 8 -1.5t8 -1" fill="none" stroke="#3fb6c8" stroke-width="1.3"/><path d="M9 23h6M12 20v6" stroke="#cdcdcd" stroke-width="1.2"/></svg><div style="left:6px;top:650px;width:30px;height:30px;background:#3c3c3c;border:1px solid #2c2c2c"></div><svg style="left:18px;top:664px" width="6" height="4" viewBox="0 0 6 4" ><path d="M0 0h6l-3 3.5z" fill="#d0d0d0"/></svg><div style="left:43px;top:142px;width:1px;height:892px;background:#383838;"></div><div style="left:45px;top:142px;width:1418px;height:890px;border:1px solid #9a9a9a"></div><span class="t" style="left:54px;top:145px;color:#d6d6d6;letter-spacing:0.4px">View</span><span class="t" style="left:94px;top:145px;color:#d6d6d6;letter-spacing:0.35px">Shading</span><span class="t" style="left:152px;top:145px;color:#d6d6d6;letter-spacing:0.55px">Lighting</span><span class="t" style="left:210px;top:145px;color:#d6d6d6;letter-spacing:0.4px">Show</span><span class="t" style="left:254px;top:145px;color:#d6d6d6;letter-spacing:0.15px">Renderer</span><span class="t" style="left:316px;top:145px;color:#d6d6d6;letter-spacing:-0.1px">Panels</span><div style="left:49px;top:162px;width:1px;height:18px;background:#777"></div><div style="left:48px;top:167px;width:3px;height:8px;background:#888"></div><svg style="left:58px;top:165px" width="16" height="11" viewBox="0 0 16 11" ><rect x="0.5" y="1" width="10" height="8.5" rx="1" fill="#d0d0d0"/><path d="M11 5.2l4.5-4v8.5z" fill="#d0d0d0"/></svg><svg style="left:78px;top:163px" width="16" height="15" viewBox="0 0 16 15" ><rect x="4" y="1.5" width="7" height="6" fill="#9a9a9a"/><path d="M11.5 4.5l4-3.5v8z" fill="#d0d0d0"/><circle cx="4.8" cy="9.8" r="3.31" fill="#3fb6c8"/><rect x="3.79" y="5.20" width="2.02" height="9.20" fill="#3fb6c8" transform="rotate(0 4.8 9.8)"/><rect x="3.79" y="5.20" width="2.02" height="9.20" fill="#3fb6c8" transform="rotate(45 4.8 9.8)"/><rect x="3.79" y="5.20" width="2.02" height="9.20" fill="#3fb6c8" transform="rotate(90 4.8 9.8)"/><rect x="3.79" y="5.20" width="2.02" height="9.20" fill="#3fb6c8" transform="rotate(135 4.8 9.8)"/><circle cx="4.8" cy="9.8" r="1.66" fill="#444"/></svg><svg style="left:102px;top:165px" width="8" height="12" viewBox="0 0 8 12" ><path d="M0.5 0h7v11.5l-3.5-3.5l-3.5 3.5z" fill="#d0d0d0"/></svg><svg style="left:118px;top:163px" width="16" height="15" viewBox="0 0 16 15" ><path d="M0.5 14l3-4.5h11.5l-3 4.5z" fill="none" stroke="#d0d0d0" stroke-width="1"/><path d="M4 12h8M5 10.5h8" stroke="#d0d0d0" stroke-width="0.9"/><path d="M4 12.5V4l6-3.5v9z" fill="#3fb6c8"/></svg><svg style="left:139px;top:162px" width="16" height="17" viewBox="0 0 16 17" ><path d="M6.5 1v9.5M1 9.5h9" stroke="#d0d0d0" stroke-width="1.3"/><path d="M6.5 0l2.5 3.5h-5zM0 9.5l3.5-2.5v5z" fill="#d0d0d0"/><circle cx="11.5" cy="10" r="2.6" fill="none" stroke="#3fb6c8" stroke-width="1.4"/><path d="M9.5 12l-3 3.5" stroke="#3fb6c8" stroke-width="1.6"/></svg><svg style="left:159px;top:163px" width="14" height="15" viewBox="0 0 14 15" ><path d="M10.5 1l2.5 2.5l-8 8l-2.5-2.5z" fill="#d0d0d0"/><path d="M2 9.5l2.5 2.5l-3.5 1.5z" fill="#3fb6c8"/><path d="M8 13.5q4 0.5 5-2.5" fill="none" stroke="#999" stroke-width="1"/></svg><div style="left:180px;top:162px;width:1px;height:18px;background:#777"></div><div style="left:179px;top:167px;width:3px;height:8px;background:#888"></div><div style="left:188px;top:162px;width:19px;height:19px;background:#5285a6;border-radius:2px"></div><svg style="left:191px;top:165px" width="13" height="13" viewBox="0 0 13 13" ><rect x="0.6" y="0.6" width="11.8" height="11.8" fill="#3a3a3a" stroke="#e6e6e6" stroke-width="1.2"/><path d="M4.5 0.6v11.8M8.5 0.6v11.8M0.6 4.5h11.8M0.6 8.5h11.8" stroke="#e6e6e6" stroke-width="1.1"/></svg><svg style="left:210px;top:165px" width="15" height="12" viewBox="0 0 15 12" ><rect x="0.6" y="0.6" width="13.8" height="10.8" fill="#3a3a3a" stroke="#d0d0d0" stroke-width="1.1"/><path d="M1 2.6h13M1 9.4h13" stroke="#d0d0d0" stroke-width="0.9"/><path d="M2 1.6h11M2 10.4h11" stroke="#d0d0d0" stroke-width="1" stroke-dasharray="1 1"/></svg><svg style="left:230px;top:165px" width="15" height="12" viewBox="0 0 15 12" ><rect x="0.6" y="0.6" width="13.8" height="10.8" fill="#3a3a3a" stroke="#d0d0d0" stroke-width="1.1"/><circle cx="7.5" cy="6" r="2.6" fill="#3fb6c8"/></svg><div style="left:248px;top:162px;width:18px;height:19px;background:#383838;border:1px solid #2a2a2a;border-radius:3px"></div><svg style="left:251px;top:165px" width="13" height="13" viewBox="0 0 13 13" ><rect x="0" y="0" width="13" height="13" fill="#4a4a4a"/><circle cx="6.5" cy="6.5" r="3.6" fill="#333"/></svg><svg style="left:270px;top:165px" width="15" height="12" viewBox="0 0 15 12" ><rect x="0.6" y="0.6" width="13.8" height="10.8" fill="#3a3a3a" stroke="#d0d0d0" stroke-width="1.1"/><path d="M7.5 1v10M1 6h13" stroke="#3fb6c8" stroke-width="1.3" stroke-dasharray="1.5 1"/></svg><svg style="left:290px;top:165px" width="15" height="12" viewBox="0 0 15 12" ><rect x="0.6" y="0.6" width="13.8" height="10.8" fill="#3a3a3a" stroke="#d0d0d0" stroke-width="1.1"/><path d="M3 9l2.5-4l2.5 4z" fill="#3fb6c8"/><circle cx="9.5" cy="5" r="2" fill="#3fb6c8"/></svg><svg style="left:310px;top:165px" width="15" height="12" viewBox="0 0 15 12" ><rect x="0.6" y="0.6" width="13.8" height="10.8" fill="#3a3a3a" stroke="#d0d0d0" stroke-width="1.1"/><path d="M4 3.2h7v2H8.6v4.4H6.4V5.2H4z" fill="#3fb6c8"/></svg><div style="left:331px;top:162px;width:1px;height:18px;background:#777"></div><div style="left:330px;top:167px;width:3px;height:8px;background:#888"></div><div style="left:339px;top:162px;width:19px;height:19px;background:#5285a6;border-radius:2px"></div><svg style="left:342px;top:164px" width="14" height="15" viewBox="0 0 14 15" ><path d="M7 0.8l6 3.2v7l-6 3.2l-6-3.2v-7z" fill="none" stroke="#3fb6c8" stroke-width="1.3"/><path d="M1 4l6 3.2l6-3.2M7 7.2v7M4 5.5v4.5l3 1.6l3-1.6v-4.5l-3-1.6z" stroke="#3fb6c8" stroke-width="1" fill="none"/></svg><svg style="left:361px;top:164px" width="14" height="15" viewBox="0 0 14 15" ><path d="M7 0.8l6 3.2v7l-6 3.2l-6-3.2v-7z" fill="#bdbdbd" stroke="#bbb" stroke-width="0.5"/><path d="M1 4l6 3.2v7l-6-3.2z" fill="#8a8a8a"/><path d="M13 4l-6 3.2v7l6-3.2z" fill="#a2a2a2"/></svg><svg style="left:381px;top:164px" width="14" height="14" viewBox="0 0 14 14" ><circle cx="7" cy="7" r="6.4" fill="#d6d6d6"/><path d="M7 0.6a6.4 6.4 0 0 1 0 12.8z" fill="#3a3a3a"/><path d="M7 2h2v2h-2zM9 4h2v2h-2zM7 6h2v2h-2zM9 8h2v2h-2zM7 10h2v2h-2zM11 6h2v2h-2z" fill="#d6d6d6"/></svg><svg style="left:401px;top:164px" width="14" height="15" viewBox="0 0 14 15" ><path d="M7 0.8l6 3.2v7l-6 3.2l-6-3.2v-7z" fill="#d6d6d6" stroke="#3fb6c8" stroke-width="1.3"/><path d="M1 4l6 3.2l6-3.2M7 7.2v7" stroke="#3fb6c8" stroke-width="1" fill="none"/><path d="M4.5 6l2.5 1.3l2.5-1.3v4l-2.5 1.3l-2.5-1.3z" fill="#444"/></svg><svg style="left:422px;top:164px" width="13" height="14" viewBox="0 0 13 14" ><defs><pattern id="chk" width="4" height="4" patternUnits="userSpaceOnUse"><rect width="2" height="2" fill="#e0e0e0"/><rect x="2" y="2" width="2" height="2" fill="#e0e0e0"/></pattern><clipPath id="chkc"><circle cx="6.5" cy="7" r="6.2"/></clipPath></defs><circle cx="6.5" cy="7" r="6.2" fill="#333"/><rect width="13" height="14" fill="url(#chk)" clip-path="url(#chkc)"/></svg><svg style="left:440px;top:162px" width="16" height="18" viewBox="0 0 16 18" ><path d="M8 4a4 4 0 0 1 2.4 7.2v2.3h-4.8v-2.3A4 4 0 0 1 8 4z" fill="#e0e0e0"/><path d="M6 15h4M6.5 16.6h3" stroke="#e0e0e0" stroke-width="1"/><path d="M8 0v2M2.5 2.5l1.4 1.4M13.5 2.5l-1.4 1.4M0.5 8h2M13.5 8h2" stroke="#e0e0e0" stroke-width="1"/></svg><svg style="left:461px;top:164px" width="15" height="14" viewBox="0 0 15 14" ><circle cx="9.5" cy="6" r="4.8" fill="#3f6060"/><path d="M0.5 10l4 3M2.5 8.5l4 3" stroke="#5a5a5a" stroke-width="1"/></svg><div style="left:482px;top:162px;width:1px;height:18px;background:#777"></div><div style="left:481px;top:167px;width:3px;height:8px;background:#888"></div><svg style="left:492px;top:163px" width="14" height="16" viewBox="0 0 14 16" ><path d="M1 10.5l6-2.5l6 2.5l-6 2.8z" fill="none" stroke="#3fb6c8" stroke-width="1"/><path d="M3 12.5l6-2.5M5 13.5l6-2.5" stroke="#3fb6c8" stroke-width="0.8"/><ellipse cx="7" cy="5.5" rx="5.4" ry="4.4" fill="#cfcfcf"/><path d="M3.5 8.5h1.6v2.5H3.5zM6.2 8.8h1.6v2.6H6.2zM8.9 8.5h1.6v2.5H8.9z" fill="#cfcfcf"/></svg><svg style="left:511px;top:165px" width="16" height="12" viewBox="0 0 16 12" ><circle cx="5.5" cy="6" r="5" fill="none" stroke="#d0d0d0" stroke-width="1"/><circle cx="7.5" cy="6" r="5" fill="none" stroke="#d0d0d0" stroke-width="1"/><circle cx="10.5" cy="6" r="5.2" fill="#d6d6d6"/></svg><svg style="left:532px;top:164px" width="14" height="14" viewBox="0 0 14 14" ><circle cx="7" cy="7" r="5.6" fill="none" stroke="#d0d0d0" stroke-width="1.8" stroke-dasharray="2 1.4"/><path d="M7 1.4a5.6 5.6 0 0 1 0 11.2" fill="none" stroke="#3fb6c8" stroke-width="2"/></svg><div style="left:550px;top:162px;width:19px;height:19px;background:#383838;border:1px solid #2a2a2a;border-radius:3px"></div><svg style="left:553px;top:165px" width="13" height="13" viewBox="0 0 13 13" ><rect x="0" y="4" width="9" height="9" fill="#3f5f5f"/><path d="M6 1l6 6M8.5 0.5l4 4M4 1.5l3 3" stroke="#555" stroke-width="1"/></svg><div style="left:573px;top:162px;width:1px;height:18px;background:#777"></div><div style="left:572px;top:167px;width:3px;height:8px;background:#888"></div><svg style="left:583px;top:163px" width="16" height="17" viewBox="0 0 16 17" ><rect x="1" y="1" width="9" height="8" fill="none" stroke="#3fb6c8" stroke-width="1.3" stroke-dasharray="2.4 1.4"/><path d="M7.5 4.5L7.5 14.4L9.8 12.2L11.6 16.2L13.4 15.5L11.6 11.5L14.7 11.5z" fill="#d0d0d0" stroke="#444" stroke-width="0.6"/></svg><div style="left:604px;top:162px;width:1px;height:18px;background:#777"></div><div style="left:603px;top:167px;width:3px;height:8px;background:#888"></div><svg style="left:614px;top:164px" width="14" height="14" viewBox="0 0 14 14" ><rect x="4.5" y="0.8" width="8.5" height="8.5" fill="none" stroke="#d0d0d0" stroke-width="1.4"/><rect x="0.5" y="4.5" width="9" height="9" fill="#d0d0d0"/></svg><svg style="left:635px;top:164px" width="14" height="14" viewBox="0 0 14 14" ><rect x="5" y="0.800" width="8" height="8" fill="none" stroke="#d0d0d0" stroke-width="1.300"/><rect x="7.800" y="3.500" width="2.600" height="2.600" fill="#3fb6c8"/><path d="M0.500 4.500h3.500v5.500h5.500v3.500h-9z" fill="#3fb6c8"/></svg><svg style="left:655px;top:164px" width="14" height="14" viewBox="0 0 14 14" ><rect x="0.7" y="0.7" width="12" height="12" fill="#3a3a3a" stroke="#d0d0d0" stroke-width="1.2"/><path d="M3 3l7 7" stroke="#3fb6c8" stroke-width="1.2"/><circle cx="4.5" cy="4.5" r="1.8" fill="#3fb6c8"/><circle cx="9.5" cy="9.5" r="1.2" fill="#d0d0d0"/></svg><div style="left:676px;top:162px;width:1px;height:18px;background:#777"></div><div style="left:675px;top:167px;width:3px;height:8px;background:#888"></div><svg style="left:686px;top:164px" width="14" height="14" viewBox="0 0 14 14" ><circle cx="7" cy="7" r="6.2" fill="#d0d0d0"/><circle cx="7" cy="7" r="2" fill="#444"/><path d="M7 7l0-6.2M7 7l5.4 3.1M7 7l-5.4 3.1M7 7l5.4-3.1M7 7l-5.4-3.1M7 7v6.2" stroke="#444" stroke-width="1.1"/></svg><div style="left:705px;top:163px;width:38px;height:14px;background:#2b2b2b;border-radius:3px"></div><span class="t" style="left:710px;top:164px;color:#e0e0e0;">0.00</span><svg style="left:749px;top:165px" width="12" height="12" viewBox="0 0 12 12" ><rect x="5" y="0" width="6.200" height="12" fill="#d6d6d6"/><circle cx="5" cy="6" r="4.300" fill="#d0d0d0"/><path d="M5 1.700a4.300 4.300 0 0 1 0 8.600z" fill="#444"/></svg><div style="left:767px;top:163px;width:38px;height:14px;background:#2b2b2b;border-radius:3px"></div><span class="t" style="left:772px;top:164px;color:#e0e0e0;">1.00</span><div style="left:808px;top:162px;width:19px;height:19px;background:#5285a6;border-radius:2px"></div><svg style="left:810px;top:164px" width="15" height="15" viewBox="0 0 15 15" ><circle cx="7.5" cy="7.5" r="6.6" fill="#3fb6c8" stroke="#2a6a78" stroke-width="1"/><text x="7.5" y="9.8" font-size="6.3" font-weight="bold" text-anchor="middle" fill="#1f5560" font-family="Liberation Sans,sans-serif">ON</text></svg><div style="left:830px;top:162px;width:137px;height:18px;background:#5d5d5d;border-radius:2px"></div><div style="left:947px;top:162px;width:1px;height:18px;background:#4a4a4a;"></div><svg style="left:952px;top:168px" width="10" height="6" viewBox="0 0 10 6" ><path d="M0 0h10l-5.0 6z" fill="#d0d0d0"/></svg><span class="t" style="left:833px;top:164px;color:#e6e6e6;">sRGB gamma</span><div style="left:1464px;top:142px;width:1px;height:892px;background:#383838;"></div><div style="left:1474px;top:149px;width:127px;height:1px;background:repeating-linear-gradient(to right,#b4b4b4 0 1px,transparent 1px 3px)"></div><div style="left:1474px;top:152px;width:127px;height:1px;background:repeating-linear-gradient(to right,#b4b4b4 0 1px,transparent 1px 3px)"></div><div style="left:1741px;top:149px;width:124px;height:1px;background:repeating-linear-gradient(to right,#b4b4b4 0 1px,transparent 1px 3px)"></div><div style="left:1741px;top:152px;width:124px;height:1px;background:repeating-linear-gradient(to right,#b4b4b4 0 1px,transparent 1px 3px)"></div><span class="t" style="left:1618px;top:145px;color:#c4c4c4;font-size:10px;transform-origin:0 0;transform:scaleX(0.865)">Channel Box / Layer Editor</span><div style="left:1869px;top:143px;width:13px;height:13px;background:#4c4c4c;border:1px solid #262626;border-radius:3px"></div><div style="left:1885px;top:143px;width:13px;height:13px;background:#4c4c4c;border:1px solid #262626;border-radius:3px"></div><svg style="left:1871px;top:145px" width="10" height="10" viewBox="0 0 10 10" ><path d="M4 0.8h5.2v5.2h-1.4V2.2H4z" fill="#dcdcdc"/><rect x="0.5" y="3.5" width="6" height="6" fill="#dcdcdc"/><rect x="1.8" y="6" width="3.2" height="1.6" fill="#333"/></svg><svg style="left:1887px;top:145px" width="10" height="10" viewBox="0 0 10 10" ><path d="M1 1l7.6 7.6M8.6 1L1 8.6" stroke="#dcdcdc" stroke-width="2"/></svg><svg style="left:1836px;top:161px" width="18" height="18" viewBox="0 0 18 18" ><path d="M10 5v6.5h-5" fill="none" stroke="#222" stroke-width="1.4"/><path d="M10.5 6v5.5M10.5 11.5h-5M10.5 11.5l4 3.5" stroke="#cfcfcf" stroke-width="1.2"/><path d="M10.5 1l2.6 6h-5.2z" fill="#46c83c"/><path d="M0.5 10.5l6-2.6v5.4z" fill="#2030c8"/><path d="M17.5 17.5l-6-2l3.6-3.6z" fill="#e03030"/></svg><svg style="left:1858px;top:162px" width="16" height="16" viewBox="0 0 16 16" ><circle cx="8" cy="8" r="7" fill="none" stroke="#5c5c5c" stroke-width="1.2"/><path d="M8 1.5v7.5l-3.5 4.5a7 7 0 0 1 3.5-12z" fill="#3c6a40"/></svg><svg style="left:1879px;top:163px" width="16" height="15" viewBox="0 0 16 15" ><path d="M1.5 13.5l11-10.5" stroke="#6e3c3c" stroke-width="1.3"/><path d="M14 1.5l-5.5 1.5l4 4z" fill="#6e3c3c"/></svg><span class="t" style="left:1480px;top:185px;color:#d6d6d6;">Channels</span><span class="t" style="left:1543px;top:185px;color:#d6d6d6;">Edit</span><span class="t" style="left:1578px;top:185px;color:#d6d6d6;">Object</span><span class="t" style="left:1627px;top:185px;color:#d6d6d6;">Show</span><div style="left:1473px;top:203px;width:423px;height:571px;background:#2b2b2b;"></div><div style="left:1471px;top:776px;width:1427px;height:1px;background:#353535;width:427px"></div><div style="left:1466px;top:1033px;width:454px;height:1px;background:#3a3a3a;"></div><div style="left:1899px;top:239px;width:21px;height:163px;background:#5e5e5e;border-radius:2px 0 0 2px"></div><span class="t" style="left:1916px;top:152px;transform-origin:0 0;transform:rotate(90deg);color:#bdbdbd;letter-spacing:0.45px">Attribute Editor</span><span class="t" style="left:1916px;top:257px;transform-origin:0 0;transform:rotate(90deg);color:#e8e8e8;letter-spacing:0.25px">Channel Box / Layer Editor</span><div style="left:1472px;top:786px;width:61px;height:21px;background:#636363;border-radius:2px 2px 0 0"></div><div style="left:1534px;top:786px;width:60px;height:21px;background:#3b3b3b;border-radius:2px 2px 0 0"></div><div style="left:1595px;top:786px;width:48px;height:21px;background:#3b3b3b;border-radius:2px 2px 0 0"></div><span class="t" style="left:1484px;top:790px;color:#ffffff;">Display</span><span class="t" style="left:1545px;top:791px;color:#c0c0c0;">Render</span><span class="t" style="left:1606px;top:791px;color:#c0c0c0;">Anim</span><div style="left:1472px;top:807px;width:426px;height:225px;border:1px solid #303030"></div><span class="t" style="left:1483px;top:812px;color:#d6d6d6;letter-spacing:-0.4px">Layers</span><span class="t" style="left:1529px;top:812px;color:#d6d6d6;letter-spacing:0.5px">Options</span><span class="t" style="left:1586px;top:812px;color:#d6d6d6;letter-spacing:0.15px">Help</span><svg style="left:1799px;top:834px" width="16" height="13" viewBox="0 0 16 13" ><path d="M0.5 7l7-5l3 2.2v5.6l-3 2.2z" fill="#d4d4d4"/><path d="M11.8 2.5l3.6 4h-2v4h-3.2v-4h-2z" fill="#3fb6c8" stroke="#444" stroke-width="0.5"/></svg><svg style="left:1821px;top:834px" width="17" height="13" viewBox="0 0 17 13" ><path d="M0.5 7l7-5l3 2.2v5.6l-3 2.2z" fill="#d4d4d4"/><path d="M12.6 11.5l3.6-4h-2v-4H11v4h-2z" fill="#3fb6c8" stroke="#444" stroke-width="0.5"/></svg><svg style="left:1848px;top:833px" width="17" height="14" viewBox="0 0 17 14" ><path d="M0.5 8l7.5-5.2l5.5 3.8l-6.5 5.8z" fill="#d4d4d4"/><path d="M9.5 4h6.4M12.7 0.8v6.4" stroke="#444" stroke-width="3"/><path d="M9.9 4h5.6M12.7 1.2v5.6" stroke="#3fb6c8" stroke-width="2"/></svg><svg style="left:1872px;top:832px" width="17" height="15" viewBox="0 0 17 15" ><path d="M0.5 9l7.5-5.2l6 4.2l-6.5 5.8z" fill="#d4d4d4"/><circle cx="11" cy="5" r="3.9" fill="#444"/><circle cx="11" cy="5" r="3.3" fill="#3fb6c8"/></svg><div style="left:1476px;top:855px;width:416px;height:173px;background:#2b2b2b;"></div><div style="left:1480px;top:860px;width:9px;height:13px;background:#2b2b2b;border:1px solid #1c1c1c;border-radius:2px"></div><div style="left:1492px;top:860px;width:9px;height:13px;background:#2b2b2b;border:1px solid #1c1c1c;border-radius:2px"></div><div style="left:1504px;top:860px;width:9px;height:13px;background:#2b2b2b;border:1px solid #1c1c1c;border-radius:2px"></div><span class="t" style="left:1481px;top:860px;color:#e0e0e0;font-size:10px;">V</span><span class="t" style="left:1493px;top:860px;color:#e0e0e0;font-size:10px;">P</span><div style="left:1516px;top:859px;width:16px;height:14px;background:#9e0030;"></div><span class="t" style="left:1535px;top:859px;color:#ffffff;font-size:11px;letter-spacing:0.07px">Armstrong_Light_Panel_OFF_mb_standart:Ceiling_Armstr</span><div style="left:7px;top:1039px;width:1px;height:27px;background:repeating-linear-gradient(to bottom,#a8a8a8 0 1px,transparent 1px 3px)"></div><div style="left:10px;top:1039px;width:1px;height:27px;background:repeating-linear-gradient(to bottom,#a8a8a8 0 1px,transparent 1px 3px)"></div><div style="left:17px;top:1038px;width:1628px;height:28px;background:#2b2b2b;"></div><div style="left:26px;top:1038px;width:12px;height:28px;background:#595959;"></div><span class="t" style="left:28px;top:1051px;color:#ffffff;font-size:10px;">1</span><div style="left:79px;top:1051px;width:2px;height:15px;background:#9c9c9c;"></div><span class="t" style="left:81px;top:1036px;color:#9c9c9c;font-size:10.5px;">5</span><div style="left:146px;top:1051px;width:2px;height:15px;background:#9c9c9c;"></div><span class="t" style="left:148px;top:1036px;color:#9c9c9c;font-size:10.5px;">10</span><div style="left:213px;top:1051px;width:2px;height:15px;background:#9c9c9c;"></div><span class="t" style="left:215px;top:1036px;color:#9c9c9c;font-size:10.5px;">15</span><div style="left:281px;top:1051px;width:2px;height:15px;background:#9c9c9c;"></div><span class="t" style="left:283px;top:1036px;color:#9c9c9c;font-size:10.5px;">20</span><div style="left:348px;top:1051px;width:2px;height:15px;background:#9c9c9c;"></div><span class="t" style="left:350px;top:1036px;color:#9c9c9c;font-size:10.5px;">25</span><div style="left:415px;top:1051px;width:2px;height:15px;background:#9c9c9c;"></div><span class="t" style="left:417px;top:1036px;color:#9c9c9c;font-size:10.5px;">30</span><div style="left:482px;top:1051px;width:2px;height:15px;background:#9c9c9c;"></div><span class="t" style="left:484px;top:1036px;color:#9c9c9c;font-size:10.5px;">35</span><div style="left:549px;top:1051px;width:2px;height:15px;background:#9c9c9c;"></div><span class="t" style="left:551px;top:1036px;color:#9c9c9c;font-size:10.5px;">40</span><div style="left:616px;top:1051px;width:2px;height:15px;background:#9c9c9c;"></div><span class="t" style="left:618px;top:1036px;color:#9c9c9c;font-size:10.5px;">45</span><div style="left:684px;top:1051px;width:2px;height:15px;background:#9c9c9c;"></div><span class="t" style="left:686px;top:1036px;color:#9c9c9c;font-size:10.5px;">50</span><div style="left:751px;top:1051px;width:2px;height:15px;background:#9c9c9c;"></div><span class="t" style="left:753px;top:1036px;color:#9c9c9c;font-size:10.5px;">55</span><div style="left:818px;top:1051px;width:2px;height:15px;background:#9c9c9c;"></div><span class="t" style="left:820px;top:1036px;color:#9c9c9c;font-size:10.5px;">60</span><div style="left:885px;top:1051px;width:2px;height:15px;background:#9c9c9c;"></div><span class="t" style="left:887px;top:1036px;color:#9c9c9c;font-size:10.5px;">65</span><div style="left:952px;top:1051px;width:2px;height:15px;background:#9c9c9c;"></div><span class="t" style="left:954px;top:1036px;color:#9c9c9c;font-size:10.5px;">70</span><div style="left:1019px;top:1051px;width:2px;height:15px;background:#9c9c9c;"></div><span class="t" style="left:1021px;top:1036px;color:#9c9c9c;font-size:10.5px;">75</span><div style="left:1087px;top:1051px;width:2px;height:15px;background:#9c9c9c;"></div><span class="t" style="left:1089px;top:1036px;color:#9c9c9c;font-size:10.5px;">80</span><div style="left:1154px;top:1051px;width:2px;height:15px;background:#9c9c9c;"></div><span class="t" style="left:1156px;top:1036px;color:#9c9c9c;font-size:10.5px;">85</span><div style="left:1221px;top:1051px;width:2px;height:15px;background:#9c9c9c;"></div><span class="t" style="left:1223px;top:1036px;color:#9c9c9c;font-size:10.5px;">90</span><div style="left:1288px;top:1051px;width:2px;height:15px;background:#9c9c9c;"></div><span class="t" style="left:1290px;top:1036px;color:#9c9c9c;font-size:10.5px;">95</span><div style="left:1355px;top:1051px;width:2px;height:15px;background:#9c9c9c;"></div><span class="t" style="left:1357px;top:1036px;color:#9c9c9c;font-size:10.5px;">100</span><div style="left:1422px;top:1051px;width:2px;height:15px;background:#9c9c9c;"></div><span class="t" style="left:1424px;top:1036px;color:#9c9c9c;font-size:10.5px;">105</span><div style="left:1490px;top:1051px;width:2px;height:15px;background:#9c9c9c;"></div><span class="t" style="left:1492px;top:1036px;color:#9c9c9c;font-size:10.5px;">110</span><div style="left:1557px;top:1051px;width:2px;height:15px;background:#9c9c9c;"></div><span class="t" style="left:1559px;top:1036px;color:#9c9c9c;font-size:10.5px;">115</span><div style="left:1624px;top:1051px;width:2px;height:15px;background:#9c9c9c;"></div><span class="t" style="left:1625px;top:1036px;color:#9c9c9c;font-size:10.5px;">120</span><div style="left:1652px;top:1044px;width:68px;height:18px;background:#2b2b2b;border-radius:2px"></div><span class="t" style="left:1657px;top:1046px;color:#e0e0e0;">1</span><svg style="left:1725px;top:1040px" width="190" height="24" viewBox="1725 1040 190 24"><rect x="1729.7" y="1046" width="2.3" height="12.4" fill="#cfcfcf"/><path d="M1739.3 1046V1058.4L1732.5 1052.2z" fill="#cfcfcf"/><path d="M1746 1046V1058.4L1739.3 1052.2z" fill="#cfcfcf"/><rect x="1754.7" y="1046" width="2.3" height="12.4" fill="#cfcfcf"/><path d="M1767 1046V1058.4L1758 1052.2z" fill="#cfcfcf"/><rect x="1777" y="1046" width="3" height="12.4" fill="#e8833a"/><rect x="1778" y="1043" width="1" height="2" fill="#cfcfcf"/><rect x="1778" y="1059.4" width="1" height="2" fill="#cfcfcf"/><path d="M1790.3 1046V1058.4L1781.6 1052.2z" fill="#cfcfcf"/><path d="M1813 1043.8V1060L1800 1051.9z" fill="#cfcfcf"/><path d="M1823.6 1043.8V1060L1836.7 1051.9z" fill="#cfcfcf"/><path d="M1846.6 1046V1058.4L1855.4 1052.2z" fill="#cfcfcf"/><rect x="1857" y="1046" width="3" height="12.4" fill="#e8833a"/><rect x="1858" y="1043" width="1" height="2" fill="#cfcfcf"/><rect x="1858" y="1059.4" width="1" height="2" fill="#cfcfcf"/><path d="M1869.7 1046V1058.4L1878.9 1052.2z" fill="#cfcfcf"/><rect x="1880" y="1046" width="2.3" height="12.4" fill="#cfcfcf"/><path d="M1890 1046V1058.4L1897 1052.2z" fill="#cfcfcf"/><path d="M1897 1046V1058.4L1904 1052.2z" fill="#cfcfcf"/><rect x="1905" y="1046" width="2.3" height="12.4" fill="#cfcfcf"/></svg><div style="left:7px;top:1075px;width:1px;height:23px;background:repeating-linear-gradient(to bottom,#a8a8a8 0 1px,transparent 1px 3px)"></div><div style="left:10px;top:1075px;width:1px;height:23px;background:repeating-linear-gradient(to bottom,#a8a8a8 0 1px,transparent 1px 3px)"></div><div style="left:18px;top:1075px;width:68px;height:23px;background:#2b2b2b;border-radius:2px"></div><span class="t" style="left:24px;top:1080px;color:#e0e0e0;">1</span><div style="left:94px;top:1075px;width:68px;height:23px;background:#2b2b2b;border-radius:2px"></div><span class="t" style="left:100px;top:1080px;color:#e0e0e0;">1</span><div style="left:169px;top:1075px;width:1280px;height:23px;background:#373737;"></div><div style="left:176px;top:1077px;width:770px;height:19px;background:#5e5e5e;border-radius:2px"></div><div style="left:180px;top:1081px;width:13px;height:12px;background:#9a9a9a;border-radius:2px"></div><div style="left:929px;top:1081px;width:13px;height:12px;background:#9a9a9a;border-radius:2px"></div><span class="t" style="left:197px;top:1080px;color:#e0e0e0;">1</span><span class="t" style="left:907px;top:1080px;color:#e0e0e0;">120</span><div style="left:1456px;top:1075px;width:68px;height:23px;background:#2b2b2b;border-radius:2px"></div><span class="t" style="left:1462px;top:1080px;color:#e0e0e0;">120</span><div style="left:1532px;top:1075px;width:68px;height:23px;background:#2b2b2b;border-radius:2px"></div><span class="t" style="left:1537px;top:1080px;color:#e0e0e0;">200</span><svg style="left:1606px;top:1082px" width="9" height="5" viewBox="0 0 9 5" ><path d="M0.5 0.5h8l-4.0 4z" fill="#555" stroke="#8a8a8a" stroke-width="1"/></svg><div style="left:1622px;top:1075px;width:101px;height:23px;border:1px solid #555;border-radius:2px"></div><span class="t" style="left:1628px;top:1080px;color:#d6d6d6;">No Anim Layer</span><svg style="left:1735px;top:1082px" width="9" height="5" viewBox="0 0 9 5" ><path d="M0.5 0.5h8l-4.0 4z" fill="#555" stroke="#8a8a8a" stroke-width="1"/></svg><div style="left:1751px;top:1075px;width:102px;height:23px;border:1px solid #555;border-radius:2px"></div><span class="t" style="left:1757px;top:1080px;color:#d6d6d6;">No Character Set</span><svg style="left:1861px;top:1077px" width="18" height="18" viewBox="0 0 18 18" ><path d="M3.2 5.5A7 7 0 0 1 15.6 7" fill="none" stroke="#cfcfcf" stroke-width="1.2"/><path d="M14.8 12.5A7 7 0 0 1 2.4 11" fill="none" stroke="#cfcfcf" stroke-width="1.2"/><path d="M1.5 2.5l1 4.2l3.8-1.4z" fill="#cfcfcf"/><path d="M16.5 15.5l-1-4.2l-3.8 1.4z" fill="#cfcfcf"/><path d="M4 9h10" stroke="#cfcfcf" stroke-width="1"/><rect x="7.8" y="5" width="2.4" height="8" fill="#e8833a"/></svg><svg style="left:1889px;top:1076px" width="21" height="20" viewBox="0 0 21 20" ><circle cx="5" cy="5.5" r="3.31" fill="#cfcfcf"/><rect x="3.99" y="0.90" width="2.02" height="9.20" fill="#cfcfcf" transform="rotate(0 5 5.5)"/><rect x="3.99" y="0.90" width="2.02" height="9.20" fill="#cfcfcf" transform="rotate(45 5 5.5)"/><rect x="3.99" y="0.90" width="2.02" height="9.20" fill="#cfcfcf" transform="rotate(90 5 5.5)"/><rect x="3.99" y="0.90" width="2.02" height="9.20" fill="#cfcfcf" transform="rotate(135 5 5.5)"/><circle cx="5" cy="5.5" r="1.66" fill="#444"/><circle cx="14.5" cy="5.5" r="1.9" fill="#e8833a"/><path d="M14 8.5l-3.5 1l-1.5 3M14 8.5l-1 5l3 2.5v3.5M13 13.5l-3 2l-3.5-0.5M14.5 9l3 2.5l2.5-1.5" fill="none" stroke="#e8833a" stroke-width="1.9" stroke-linecap="round" stroke-linejoin="round"/></svg><div style="left:7px;top:1107px;width:1px;height:23px;background:repeating-linear-gradient(to bottom,#a8a8a8 0 1px,transparent 1px 3px)"></div><div style="left:10px;top:1107px;width:1px;height:23px;background:repeating-linear-gradient(to bottom,#a8a8a8 0 1px,transparent 1px 3px)"></div><span class="t" style="left:28px;top:1113px;color:#d6d6d6;">MEL</span><div style="left:63px;top:1108px;width:617px;height:23px;background:#2b2b2b;border-radius:2px"></div><div style="left:681px;top:1107px;width:1px;height:25px;background:#333;"></div><div style="left:687px;top:1107px;width:1200px;height:25px;background:#2b2b2b;"></div><svg style="left:1893px;top:1109px" width="19" height="19" viewBox="0 0 19 19" ><rect x="0.5" y="0.5" width="18" height="18" fill="#cfcfcf"/><rect x="0.5" y="0.5" width="18" height="3.2" fill="#e4e4e4"/><path d="M0.5 4h18" stroke="#444" stroke-width="0.8"/><rect x="2" y="1.6" width="1" height="1" fill="#444"/><rect x="4" y="1.6" width="1" height="1" fill="#444"/><rect x="6" y="1.6" width="1" height="1" fill="#444"/><text x="9.5" y="14.5" font-size="10" font-weight="bold" text-anchor="middle" fill="#3a3a3a" font-family="Liberation Sans,sans-serif">{;}</text></svg><div style="left:0px;top:1136px;width:1920px;height:1px;background:#303030;"></div><div style="left:7px;top:1140px;width:1px;height:18px;background:repeating-linear-gradient(to bottom,#a8a8a8 0 1px,transparent 1px 3px)"></div><div style="left:10px;top:1140px;width:1px;height:18px;background:repeating-linear-gradient(to bottom,#a8a8a8 0 1px,transparent 1px 3px)"></div><span class="t" style="left:29px;top:1142px;color:#c8c8c8;font-size:10px;letter-spacing:-0.17px">Select Tool: select an object</span><svg style="left:6px;top:999px" width="33" height="30" viewBox="0 0 33 30" ><path d="M16.1 0L0 9.3L6.2 14.5L9 19.5L16.1 8z" fill="#189c9e"/><path d="M16.1 0L32.2 9.3L26 14.5L23.2 19.5L16.1 8z" fill="#13898c"/><path d="M16.1 0.5L6.4 12.6L8.8 20L11.2 17.8L14.6 6z" fill="#0b6769"/><path d="M16.1 0.5L25.8 12.6L23.400 20L21 17.800L17.600 6z" fill="#085b5e"/><path d="M16.1 1.500L11.2 17.800L16.1 22.100L21.300 17.800z" fill="#158c8d"/><path d="M0 9.3L6.2 14.5L7.300 21L6.600 29.300H0z" fill="#1fe6e6"/><path d="M32.2 9.3L26 14.5L24.900 21L25.600 29.300H32.200z" fill="#14a2a3"/><path d="M9.700 20.900L11.2 17.800L16.1 22.100L21.300 17.800L22.900 20.900L16.1 28.600z" fill="#22c2c2"/></svg><div style="left:46px;top:182px;width:1416px;height:849px;background:linear-gradient(to bottom,rgb(138,158,182) 0.0%,rgb(135,155,179) 4.2%,rgb(133,152,175) 8.3%,rgb(130,149,171) 12.5%,rgb(127,145,168) 16.7%,rgb(124,142,164) 20.8%,rgb(121,139,160) 25.0%,rgb(118,135,156) 29.2%,rgb(115,132,151) 33.3%,rgb(112,128,147) 37.5%,rgb(108,124,143) 41.7%,rgb(105,120,138) 45.8%,rgb(101,116,133) 50.0%,rgb(97,111,128) 54.2%,rgb(93,106,123) 58.3%,rgb(89,101,117) 62.5%,rgb(84,96,111) 66.7%,rgb(79,91,104) 70.8%,rgb(74,85,97) 75.0%,rgb(68,78,90) 79.2%,rgb(62,71,81) 83.3%,rgb(54,62,72) 87.5%,rgb(46,52,60) 91.7%,rgb(34,39,44) 95.8%,rgb(12,13,14) 100.0%);overflow:hidden"><svg width="1416" height="849" viewBox="46 182 1416 849" style="left:0;top:0" shape-rendering="crispEdges"><g stroke="#40433f" stroke-width="1" fill="none"><path d="M564 598L673.4 683.3M564 598L787.2 561.9"/><path d="M574.1 596.4L684.8 681M567.9 601L792.1 564.5"/><path d="M584.1 594.8L696 678.8M571.9 604.1L797 567.1"/><path d="M594 593.1L707.2 676.5M575.9 607.3L802 569.8"/><path d="M603.9 591.6L718.2 674.3M579.9 610.4L807 572.5"/><path d="M613.6 590L729.2 672.1M584 613.6L812.1 575.2"/><path d="M623.4 588.4L740.1 669.9M588.2 616.9L817.3 577.9"/><path d="M633 586.8L750.9 667.8M592.4 620.1L822.5 580.7"/><path d="M642.6 585.3L761.6 665.6M596.7 623.5L827.8 583.5"/><path d="M652.1 583.7L772.2 663.5M601 626.9L833.1 586.4"/><path d="M661.6 582.2L782.8 661.4M605.4 630.3L838.5 589.3"/><path d="M670.9 580.7L793.2 659.3M609.8 633.7L844 592.2"/><path d="M680.3 579.2L803.6 657.2M614.3 637.2L849.5 595.1" stroke-width="2" stroke="#353634"/><path d="M689.5 577.7L813.9 655.2M618.9 640.8L855.1 598.1"/><path d="M698.7 576.2L824.1 653.1M623.5 644.4L860.8 601.1"/><path d="M707.8 574.7L834.2 651.1M628.2 648L866.6 604.2"/><path d="M716.9 573.3L844.2 649.1M632.9 651.7L872.4 607.3"/><path d="M725.9 571.8L854.2 647.1M637.7 655.5L878.3 610.5"/><path d="M734.8 570.4L864 645.1M642.6 659.3L884.2 613.6"/><path d="M743.7 568.9L873.8 643.2M647.6 663.2L890.3 616.9"/><path d="M752.5 567.5L883.6 641.2M652.6 667.1L896.4 620.1"/><path d="M761.3 566.1L893.2 639.3M657.7 671L902.6 623.4"/><path d="M770 564.7L902.8 637.4M662.9 675.1L908.9 626.8"/><path d="M778.6 563.3L912.3 635.5M668.1 679.2L915.3 630.2"/><path d="M787.2 561.9L921.7 633.6M673.4 683.3L921.7 633.6"/></g><g stroke="#a0002b" stroke-width="1" fill="none"><path d="M344.4 584.6L854.5 515.4M360 603.7L886.3 528.3M367.4 612.7L901 534.4M405.9 659.6L976.3 565.1M416.1 672.2L995.9 573.1M454.5 718.9L1067.2 602.2M467.4 734.7L1090.7 611.7M500.7 775.3L1149.7 635.8M369.9 572.5L570.9 794M440 563.2L670.3 771.4M498.8 555.4L751.6 752.8M514.4 553.3L772.9 748M599.6 542L886.8 722M628.3 538.2L924.4 713.5M706.5 527.9L1024.7 690.6M719.8 526.1L1041.4 686.8M804.9 514.8L1146.9 662.8"/><path d="M352 578L467.7 588.3M838 513L809.7 539.3M1172 651L1004.2 628.8M536 794L670.7 683.2"/><path d="M509.3 762.7L518.4 761L527.7 759.7L537.1 758.8L546.4 758.3L555.6 758.3L564.5 758.6L573.2 759.4L581.4 760.6L589.1 762.2L596.2 764.3L602.6 766.6L608.3 769.4L613.2 772.4L617.2 775.7M494.5 745.3L508.8 742.8L523.2 740.8L537.7 739.5L552.1 738.8L566.3 738.7L580.1 739.3L593.5 740.5L606.3 742.3L618.3 744.7L629.6 747.8L639.8 751.4L649 755.5L656.9 760.2L663.6 765.3M453 696.5L481.7 691.9L510.6 688.4L539.3 686L567.8 684.8L595.9 684.7L623.3 685.8L650 687.9L675.7 691.2L700.4 695.7L723.7 701.2L745.6 707.9L765.7 715.7L783.9 724.6L799.9 734.7M1091.6 669.1L1084.1 665.2L1077.8 661.3L1072.9 657.3L1069.2 653.3L1066.9 649.3L1066 645.4L1066.4 641.6L1068 638L1071 634.6L1075 631.5L1080.2 628.6L1086.5 626.1L1093.7 623.8L1101.7 622M1137.6 658.7L1134.2 657.1L1131.4 655.4L1129 653.7L1127.2 652L1126 650.2L1125.4 648.5L1125.3 646.8L1125.9 645.2L1127 643.7L1128.6 642.3L1130.8 641L1133.5 639.8L1136.6 638.7L1140.2 637.8M442.9 565.8L445 568.3L446 570.9L445.8 573.7L444.4 576.5L441.9 579.4L438.2 582.3L433.3 585.2L427.3 588.1L420.3 590.9L412.3 593.5L403.3 596L393.6 598.2L383.3 600.2L372.4 602M862.6 523.1L857.8 523.7L852.8 524.2L847.5 524.5L842.2 524.6L836.8 524.6L831.3 524.4L826 524.1L820.9 523.7L816 523.1L811.4 522.4L807.1 521.6L803.3 520.6L799.9 519.6L797.1 518.5M571.3 548.7L572.3 549.5L572.9 550.4L573.2 551.3L573 552.3L572.5 553.2L571.5 554.2L570.2 555.1L568.4 556L566.3 556.9L563.9 557.7L561.2 558.5L558.2 559.2L555 559.8L551.6 560.3M392.3 625.3L399.6 624.4L407 623.6L414.4 623.1L421.6 622.8L428.7 622.8L435.6 623.1L442.1 623.5L448.2 624.3L453.9 625.2L459 626.4L463.6 627.8L467.5 629.5L470.7 631.3L473.1 633.2"/></g><polygon points="860.5,275 863.5,275 859.1,480 856.1,480" fill="#a0002b" /><polygon points="871.6,268 874.4,268 870.4,477 867.6,477" fill="#a0002b" /><path d="M873 270C870 262 872 256 876 255C880 255 881 260 878 266L875 271" fill="none" stroke="#a0002b" stroke-width="2.6"/><clipPath id="mc1"><polygon points="859,352 867.6,351 862,358 860.3,368 862,380 866.5,388 862.4,390.5 856,383 852,374 851,366 853,358"/></clipPath><g clip-path="url(#mc1)"><path d="M849 351.5L869.6 351.5M849 354L869.6 354M849 356.5L869.6 356.5M849 359L869.6 359M849 361.5L869.6 361.5M849 364L869.6 364M849 366.5L869.6 366.5M849 369L869.6 369M849 371.5L869.6 371.5M849 374L869.6 374M849 376.5L869.6 376.5M849 379L869.6 379M849 381.5L869.6 381.5M849 384L869.6 384M849 386.5L869.6 386.5M849 389L869.6 389M851.5 349L851.5 392.5M854 349L854 392.5M856.5 349L856.5 392.5M859 349L859 392.5M861.5 349L861.5 392.5M864 349L864 392.5M866.5 349L866.5 392.5" stroke="#a0002b" stroke-width="1" fill="none"/></g><polygon points="859,352 867.6,351 862,358 860.3,368 862,380 866.5,388 862.4,390.5 856,383 852,374 851,366 853,358" fill="none" stroke="#a0002b" stroke-width="2"/><clipPath id="mc2"><polygon points="868,352 879,350.5 873,359 869.5,368 871,378 878,390 870,390 866,385 862.5,375 862,365 864,357"/></clipPath><g clip-path="url(#mc2)"><polygon points="868,352 879,350.5 873,359 869.5,368 871,378 878,390 870,390 866,385 862.5,375 862,365 864,357" fill="#a0002b" opacity="0.5"/><path d="M860 350.5L881 350.5M860 353L881 353M860 355.5L881 355.5M860 358L881 358M860 360.5L881 360.5M860 363L881 363M860 365.5L881 365.5M860 368L881 368M860 370.5L881 370.5M860 373L881 373M860 375.5L881 375.5M860 378L881 378M860 380.5L881 380.5M860 383L881 383M860 385.5L881 385.5M860 388L881 388M862.5 348.5L862.5 392M865 348.5L865 392M867.5 348.5L867.5 392M870 348.5L870 392M872.5 348.5L872.5 392M875 348.5L875 392M877.5 348.5L877.5 392" stroke="#a0002b" stroke-width="1" fill="none"/></g><polygon points="868,352 879,350.5 873,359 869.5,368 871,378 878,390 870,390 866,385 862.5,375 862,365 864,357" fill="none" stroke="#a0002b" stroke-width="2"/><polygon points="1258,338 1262,338 1229.7,625 1225.3,625" fill="#a0002b" /><polygon points="1272.3,329 1276.9,329 1243.9,620 1239.1,620" fill="#a0002b" /><ellipse cx="1278.600" cy="321" rx="12" ry="3.400" transform="rotate(-50 1278.600 321)" fill="none" stroke="#a0002b" stroke-width="3.400"/><clipPath id="mc3"><polygon points="1248,447 1257,446 1249,456 1245,470 1246,486 1250,498 1246,502 1240,500 1233,488 1230,472 1234,459"/></clipPath><g clip-path="url(#mc3)"><path d="M1228 446.5L1259 446.5M1228 449L1259 449M1228 451.5L1259 451.5M1228 454L1259 454M1228 456.5L1259 456.5M1228 459L1259 459M1228 461.5L1259 461.5M1228 464L1259 464M1228 466.5L1259 466.5M1228 469L1259 469M1228 471.5L1259 471.5M1228 474L1259 474M1228 476.5L1259 476.5M1228 479L1259 479M1228 481.5L1259 481.5M1228 484L1259 484M1228 486.5L1259 486.5M1228 489L1259 489M1228 491.5L1259 491.5M1228 494L1259 494M1228 496.5L1259 496.5M1228 499L1259 499M1228 501.5L1259 501.5M1230.5 444L1230.5 504M1233 444L1233 504M1235.5 444L1235.5 504M1238 444L1238 504M1240.5 444L1240.5 504M1243 444L1243 504M1245.5 444L1245.5 504M1248 444L1248 504M1250.5 444L1250.5 504M1253 444L1253 504M1255.5 444L1255.5 504" stroke="#a0002b" stroke-width="1" fill="none"/></g><polygon points="1248,447 1257,446 1249,456 1245,470 1246,486 1250,498 1246,502 1240,500 1233,488 1230,472 1234,459" fill="none" stroke="#a0002b" stroke-width="2"/><clipPath id="mc4"><polygon points="1258,447 1273,444.5 1264,456 1259.5,470 1260,484 1266,497 1256,498 1251,492 1247,480 1247,466 1251,455"/></clipPath><g clip-path="url(#mc4)"><polygon points="1258,447 1273,444.5 1264,456 1259.5,470 1260,484 1266,497 1256,498 1251,492 1247,480 1247,466 1251,455" fill="#a0002b" opacity="0.5"/><path d="M1245 444.5L1275 444.5M1245 447L1275 447M1245 449.5L1275 449.5M1245 452L1275 452M1245 454.5L1275 454.5M1245 457L1275 457M1245 459.5L1275 459.5M1245 462L1275 462M1245 464.5L1275 464.5M1245 467L1275 467M1245 469.5L1275 469.5M1245 472L1275 472M1245 474.5L1275 474.5M1245 477L1275 477M1245 479.5L1275 479.5M1245 482L1275 482M1245 484.5L1275 484.5M1245 487L1275 487M1245 489.5L1275 489.5M1245 492L1275 492M1245 494.5L1275 494.5M1245 497L1275 497M1247.5 442.5L1247.5 500M1250 442.5L1250 500M1252.5 442.5L1252.5 500M1255 442.5L1255 500M1257.5 442.5L1257.5 500M1260 442.5L1260 500M1262.5 442.5L1262.5 500M1265 442.5L1265 500M1267.5 442.5L1267.5 500M1270 442.5L1270 500M1272.5 442.5L1272.5 500" stroke="#a0002b" stroke-width="1" fill="none"/></g><polygon points="1258,447 1273,444.5 1264,456 1259.5,470 1260,484 1266,497 1256,498 1251,492 1247,480 1247,466 1251,455" fill="none" stroke="#a0002b" stroke-width="2"/><polygon points="322,551.2 824,483.7 840,513 350,576" fill="#a0002b" /><polyline points="343.2,552.1 811.1,489.5" fill="none" stroke="rgb(110,126,145)" stroke-width="1.5" stroke-dasharray="9 3"/><polyline points="345.4,554.1 812.4,491.8" fill="none" stroke="rgb(110,126,145)" stroke-width="1.5" stroke-dasharray="7 3 5 2"/><polyline points="347.6,556.1 813.7,494.2" fill="none" stroke="rgb(110,126,145)" stroke-width="1.5" stroke-dasharray="10 4"/><polyline points="349.8,558.1 815,496.5" fill="none" stroke="rgb(110,126,145)" stroke-width="1.5" stroke-dasharray="6 3 8 5"/><polyline points="352,560.1 816.3,498.8" fill="none" stroke="rgb(110,126,145)" stroke-width="1.5" stroke-dasharray="8 4"/><polyline points="363.3,570.3 823,510.8" fill="none" stroke="rgb(110,126,145)" stroke-width="1.5" stroke-dasharray="4 9"/><polygon points="824,468 1288,650 1277.1,654.9 826.5,477.3" fill="#a0002b" /><polygon points="830,490.2 1262,661.8 1236,673.5 836,512.5" fill="#a0002b" /><polyline points="845.3,487.7 1273.2,656.7" fill="none" stroke="#a0002b" stroke-width="1.2" /><polyline points="846.1,491.4 1268.8,658.7" fill="none" stroke="#a0002b" stroke-width="1.2" /><polyline points="846.9,495.1 1264.3,660.7" fill="none" stroke="#a0002b" stroke-width="1.2" /><polyline points="858,489.3 858,503.1" fill="none" stroke="#a0002b" stroke-width="1.5" /><polyline points="907.6,508.9 907.6,521.9" fill="none" stroke="#a0002b" stroke-width="1.5" /><polyline points="961.8,530.2 961.8,542.5" fill="none" stroke="#a0002b" stroke-width="1.5" /><polyline points="1029.4,556.9 1029.4,568.1" fill="none" stroke="#a0002b" stroke-width="1.5" /><polyline points="1106.1,587.1 1106.1,597.2" fill="none" stroke="#a0002b" stroke-width="1.5" /><polyline points="1178.3,615.6 1178.3,624.6" fill="none" stroke="#a0002b" stroke-width="1.5" /><polyline points="1232.5,636.9 1232.5,645.1" fill="none" stroke="#a0002b" stroke-width="1.5" /><polyline points="848.1,520.5 1192.1,663.3" fill="none" stroke="#a0002b" stroke-width="1" /><polyline points="848.2,523.7 1150.8,653.6" fill="none" stroke="#a0002b" stroke-width="1" stroke-dasharray="6 3"/><polygon points="816,473 824,477 824,468 862,483 862,520 838,514 816,492" fill="#a0002b" /><polygon points="530,793.6 1172,650.5 1234.5,671.6 545,840.9" fill="#a0002b" /><polygon points="1172,648 1228,648 1228,626.7 1288,649.7 1288,658 1290,688 1272.6,688.6 1234.7,673 1180,685" fill="#a0002b" /><clipPath id="mc5"><polygon points="1287,660 1306,669 1305,686.3 1289,688.3"/></clipPath><g clip-path="url(#mc5)"><polygon points="1287,660 1306,669 1305,686.3 1289,688.3" fill="#a0002b" opacity="0.35"/><path d="M1285 660.5L1308 660.5M1285 662.5L1308 662.5M1285 664.5L1308 664.5M1285 666.5L1308 666.5M1285 668.5L1308 668.5M1285 670.5L1308 670.5M1285 672.5L1308 672.5M1285 674.5L1308 674.5M1285 676.5L1308 676.5M1285 678.5L1308 678.5M1285 680.5L1308 680.5M1285 682.5L1308 682.5M1285 684.5L1308 684.5M1285 686.5L1308 686.5M1287.5 658L1287.5 690.3M1289.5 658L1289.5 690.3M1291.5 658L1291.5 690.3M1293.5 658L1293.5 690.3M1295.5 658L1295.5 690.3M1297.5 658L1297.5 690.3M1299.5 658L1299.5 690.3M1301.5 658L1301.5 690.3M1303.5 658L1303.5 690.3M1305.5 658L1305.5 690.3" stroke="#a0002b" stroke-width="1" fill="none"/></g><polygon points="1287,660 1306,669 1305,686.3 1289,688.3" fill="none" stroke="#a0002b" stroke-width="1.6"/><path d="M1240 644l16 6.500M1242 650l20 8M1246 657l22 9M1262 655l14 6M1268 668l10 4M1252 667l12 5M1272 661l10 4" stroke="rgb(96,109,126)" stroke-width="1.600" stroke-dasharray="2 2" fill="none"/><polyline points="553,799.8 1169.7,659" fill="none" stroke="rgb(85,98,112)" stroke-width="2" stroke-dasharray="2 2"/><polyline points="554.1,803 1174,660.5" fill="none" stroke="rgb(85,97,112)" stroke-width="2" stroke-dasharray="2 2"/><polyline points="555.6,807.2 1179.6,662.5" fill="none" stroke="rgb(85,97,111)" stroke-width="2.8" /><polyline points="557.5,812.6 1186.6,665" fill="none" stroke="rgb(84,96,111)" stroke-width="2.8" /><polyline points="560.3,820.5 1197,668.7" fill="none" stroke="rgb(83,95,110)" stroke-width="1.5" stroke-dasharray="5 3"/><polyline points="561.5,824 1201.6,670.3" fill="none" stroke="rgb(83,95,109)" stroke-width="1.5" stroke-dasharray="4 4"/><polyline points="562.7,827.4 1206.2,671.9" fill="none" stroke="rgb(83,94,109)" stroke-width="1.5" stroke-dasharray="5 3"/><polyline points="611.2,785.3 611.2,801.2" fill="none" stroke="#a0002b" stroke-width="1.6" /><polyline points="695.9,766 695.9,780.6" fill="none" stroke="#a0002b" stroke-width="1.6" /><polyline points="780.6,746.7 780.6,760.1" fill="none" stroke="#a0002b" stroke-width="1.6" /><polyline points="865.3,727.4 865.3,739.6" fill="none" stroke="#a0002b" stroke-width="1.6" /><polyline points="950,708.1 950,719.1" fill="none" stroke="#a0002b" stroke-width="1.6" /><polyline points="1034.7,688.8 1034.7,698.6" fill="none" stroke="#a0002b" stroke-width="1.6" /><polyline points="1106.3,672.5 1106.3,681.2" fill="none" stroke="#a0002b" stroke-width="1.6" /><polyline points="305.3,566.4 313.4,577 346.3,620 376.9,660 415.1,710 453.2,760 483.6,800 510.9,836 526,856 537.7,871.4" fill="none" stroke="#a0002b" stroke-width="3" /><polyline points="309.6,568.1 316.5,577 349.7,620 380.7,660 419.1,710 457.6,760 487.8,800 514.9,836 529.9,856 539.5,868.9" fill="none" stroke="#a0002b" stroke-width="2.2" /><polyline points="313.4,569.6 319.2,577 352.8,620 384,660 422.7,710 461.4,760 491.5,800 518.5,836 533.4,856 541.2,866.6" fill="none" stroke="#a0002b" stroke-width="2.6" /><polyline points="318.1,571.4 322.5,577 356.4,620 388,660 427,710 466,760 495.9,800 522.8,836 537.5,856 543.3,863.9" fill="none" stroke="#a0002b" stroke-width="2.2" /><polyline points="321.9,572.9 325.2,577 359.5,620 391.4,660 430.6,710 469.8,760 499.6,800 526.4,836 540.9,856 545,861.6" fill="none" stroke="#a0002b" stroke-width="3" /><polyline points="326.6,574.7 328.5,577 363.1,620 395.4,660 434.9,710 474.4,760 504.1,800 530.7,836 545.1,856 547.2,859" fill="none" stroke="#a0002b" stroke-width="2.4" /><polyline points="330.2,600 349.5,598" fill="none" stroke="#a0002b" stroke-width="1.4" /><polyline points="360.7,640 382,638" fill="none" stroke="#a0002b" stroke-width="1.4" /><polyline points="391.2,680 414.1,678" fill="none" stroke="#a0002b" stroke-width="1.4" /><polyline points="421.7,720 445.9,718" fill="none" stroke="#a0002b" stroke-width="1.4" /><polyline points="452.2,760 477.8,758" fill="none" stroke="#a0002b" stroke-width="1.4" /><polyline points="482.6,800 507.3,798" fill="none" stroke="#a0002b" stroke-width="1.4" /><polyline points="512.9,840 536.7,838" fill="none" stroke="#a0002b" stroke-width="1.4" /><polygon points="330.8,577 365.8,620 398.2,660 438,710 477.8,760 507.3,800 533.9,836 548,856 553.6,856 539.6,836 513.2,800 483.9,760 443.7,710 403.6,660 370.6,620 335.2,577" fill="#a0002b" /><polygon points="335.2,577 370.6,620 403.6,660 443.7,710 483.9,760 513.2,800 539.6,836 553.6,856 558.1,856 544.4,836 518.2,800 489,760 448.5,710 408,660 374.7,620 338.8,577" fill="#a0002b" /><polyline points="337,577 372.7,620 405.8,660 446.1,710 486.4,760 515.7,800 542,836" fill="none" stroke="rgb(90,103,119)" stroke-width="2" stroke-dasharray="7 4"/><polygon points="338.8,577 374.7,620 408,660 448.5,710 489,760 518.2,800 544.4,836 558.1,856 571,856 557.8,836 532,800 503.3,760 461.9,710 420.5,660 386,620 349,577" fill="#a0002b" /><polygon points="538,873 569,875 577,863 568,850 548,846 528,860" fill="#a0002b" /><polyline points="360,580 540,792" fill="none" stroke="#a0002b" stroke-width="1.6" /><polyline points="363.2,580 544,791.5" fill="none" stroke="#a0002b" stroke-width="1.6" /><polyline points="366.5,580 548,791" fill="none" stroke="#a0002b" stroke-width="1.6" /><polyline points="370.1,580 552.5,790.4" fill="none" stroke="#a0002b" stroke-width="1.6" /><polyline points="373,580 556,790" fill="none" stroke="#a0002b" stroke-width="1.6" /><polygon points="308,538.5 311.5,533 322,546 333,560 352,580 310,575 302,563 313,558" fill="#a0002b" /><polygon points="273.7,292 277.3,292 307.5,552 303.5,552" fill="#a0002b" /><polygon points="294.2,306 297.8,306 321.5,544 317.5,544" fill="#a0002b" /><path d="M277 297C272 291 269.500 285 275.500 282.300C283 281 284 289 284 300" fill="none" stroke="#a0002b" stroke-width="3.400"/><clipPath id="mc6"><polygon points="280,397 293.5,396 299.3,410.3 300.5,432 298,443 285,443.5 283,420"/></clipPath><g clip-path="url(#mc6)"><polygon points="280,397 293.5,396 299.3,410.3 300.5,432 298,443 285,443.5 283,420" fill="#a0002b" opacity="0.45"/><path d="M278 396.5L302.5 396.5M278 399L302.5 399M278 401.5L302.5 401.5M278 404L302.5 404M278 406.5L302.5 406.5M278 409L302.5 409M278 411.5L302.5 411.5M278 414L302.5 414M278 416.5L302.5 416.5M278 419L302.5 419M278 421.5L302.5 421.5M278 424L302.5 424M278 426.5L302.5 426.5M278 429L302.5 429M278 431.5L302.5 431.5M278 434L302.5 434M278 436.5L302.5 436.5M278 439L302.5 439M278 441.5L302.5 441.5M280.5 394L280.5 445.5M283 394L283 445.5M285.5 394L285.5 445.5M288 394L288 445.5M290.5 394L290.5 445.5M293 394L293 445.5M295.5 394L295.5 445.5M298 394L298 445.5" stroke="#a0002b" stroke-width="1" fill="none"/></g><polygon points="280,397 293.5,396 299.3,410.3 300.5,432 298,443 285,443.5 283,420" fill="none" stroke="#a0002b" stroke-width="2.2"/><clipPath id="mc7"><polygon points="297,396 310.7,395 315,415 315.5,440.7 301.4,441.4 303,425 300,410"/></clipPath><g clip-path="url(#mc7)"><polygon points="297,396 310.7,395 315,415 315.5,440.7 301.4,441.4 303,425 300,410" fill="#a0002b" opacity="0.45"/><path d="M295 395.5L317.5 395.5M295 398L317.5 398M295 400.5L317.5 400.5M295 403L317.5 403M295 405.5L317.5 405.5M295 408L317.5 408M295 410.5L317.5 410.5M295 413L317.5 413M295 415.5L317.5 415.5M295 418L317.5 418M295 420.5L317.5 420.5M295 423L317.5 423M295 425.5L317.5 425.5M295 428L317.5 428M295 430.5L317.5 430.5M295 433L317.5 433M295 435.5L317.5 435.5M295 438L317.5 438M295 440.5L317.5 440.5M297.5 393L297.5 443.4M300 393L300 443.4M302.5 393L302.5 443.4M305 393L305 443.4M307.5 393L307.5 443.4M310 393L310 443.4M312.5 393L312.5 443.4M315 393L315 443.4" stroke="#a0002b" stroke-width="1" fill="none"/></g><polygon points="297,396 310.7,395 315,415 315.5,440.7 301.4,441.4 303,425 300,410" fill="none" stroke="#a0002b" stroke-width="2.2"/><polygon points="459.4,402 464.6,402 488.4,768 482.6,768" fill="#a0002b" /><polygon points="486,409 491,409 513.9,776 508.1,776" fill="#a0002b" /><path d="M463 405L456.500 391C452 381 453.500 371.500 461.500 371.200C469 371 470.500 380 470.500 401" fill="none" stroke="#a0002b" stroke-width="4.600"/><clipPath id="mc8"><polygon points="464,556 477,556 479,600 485,617 464,621 470,600 466,580"/></clipPath><g clip-path="url(#mc8)"><path d="M462 556.5L487 556.5M462 559.5L487 559.5M462 562.5L487 562.5M462 565.5L487 565.5M462 568.5L487 568.5M462 571.5L487 571.5M462 574.5L487 574.5M462 577.5L487 577.5M462 580.5L487 580.5M462 583.5L487 583.5M462 586.5L487 586.5M462 589.5L487 589.5M462 592.5L487 592.5M462 595.5L487 595.5M462 598.5L487 598.5M462 601.5L487 601.5M462 604.5L487 604.5M462 607.5L487 607.5M462 610.5L487 610.5M462 613.5L487 613.5M462 616.5L487 616.5M462 619.5L487 619.5M464.5 554L464.5 623M467.5 554L467.5 623M470.5 554L470.5 623M473.5 554L473.5 623M476.5 554L476.5 623M479.5 554L479.5 623M482.5 554L482.5 623" stroke="#a0002b" stroke-width="1" fill="none"/></g><polygon points="464,556 477,556 479,600 485,617 464,621 470,600 466,580" fill="none" stroke="#a0002b" stroke-width="2"/><clipPath id="mc9"><polygon points="499,556 511,556 514,585 513,603 509,613 489,616.7 497,600 500,580"/></clipPath><g clip-path="url(#mc9)"><path d="M487 556.5L516 556.5M487 559.5L516 559.5M487 562.5L516 562.5M487 565.5L516 565.5M487 568.5L516 568.5M487 571.5L516 571.5M487 574.5L516 574.5M487 577.5L516 577.5M487 580.5L516 580.5M487 583.5L516 583.5M487 586.5L516 586.5M487 589.5L516 589.5M487 592.5L516 592.5M487 595.5L516 595.5M487 598.5L516 598.5M487 601.5L516 601.5M487 604.5L516 604.5M487 607.5L516 607.5M487 610.5L516 610.5M487 613.5L516 613.5M487 616.5L516 616.5M489.5 554L489.5 618.7M492.5 554L492.5 618.7M495.5 554L495.5 618.7M498.5 554L498.5 618.7M501.5 554L501.5 618.7M504.5 554L504.5 618.7M507.5 554L507.5 618.7M510.5 554L510.5 618.7M513.5 554L513.5 618.7" stroke="#a0002b" stroke-width="1" fill="none"/></g><polygon points="499,556 511,556 514,585 513,603 509,613 489,616.7 497,600 500,580" fill="none" stroke="#a0002b" stroke-width="2"/><clipPath id="mc10"><polygon points="477,560 500,560 499,604 481,607"/></clipPath><g clip-path="url(#mc10)"><path d="M475 560.5L502 560.5M475 564.5L502 564.5M475 568.5L502 568.5M475 572.5L502 572.5M475 576.5L502 576.5M475 580.5L502 580.5M475 584.5L502 584.5M475 588.5L502 588.5M475 592.5L502 592.5M475 596.5L502 596.5M475 600.5L502 600.5M475 604.5L502 604.5M477.5 558L477.5 609M481.5 558L481.5 609M485.5 558L485.5 609M489.5 558L489.5 609M493.5 558L493.5 609M497.5 558L497.5 609" stroke="#a0002b" stroke-width="1" fill="none"/></g><polygon points="477,560 500,560 499,604 481,607" fill="none" stroke="#a0002b" stroke-width="1"/><path d="M728 461.5h17M736.5 452v18" stroke="#a0002b" stroke-width="1" fill="none"/><g shape-rendering="auto"><path d="M71.5 993v13" stroke="#00e000" stroke-width="1.2"/><path d="M71 1006.5l-4 0.5l-4 1.5" stroke="#0000ff" stroke-width="1.2" fill="none"/><path d="M72 1007l4 3" stroke="#ff0000" stroke-width="1.2" fill="none"/><text x="68" y="990" font-size="9" font-weight="bold" fill="#00e000" font-family="Liberation Sans,sans-serif">y</text><text x="55" y="1007" font-size="9" font-weight="bold" fill="#0000ff" font-family="Liberation Sans,sans-serif">z</text><text x="76" y="1009" font-size="9" font-weight="bold" fill="#ff0000" font-family="Liberation Sans,sans-serif">x</text></g></svg><span class="t" style="left:687px;top:830px;color:#fff;font-weight:bold;font-size:11px">persp</span></div>
</body></html>
